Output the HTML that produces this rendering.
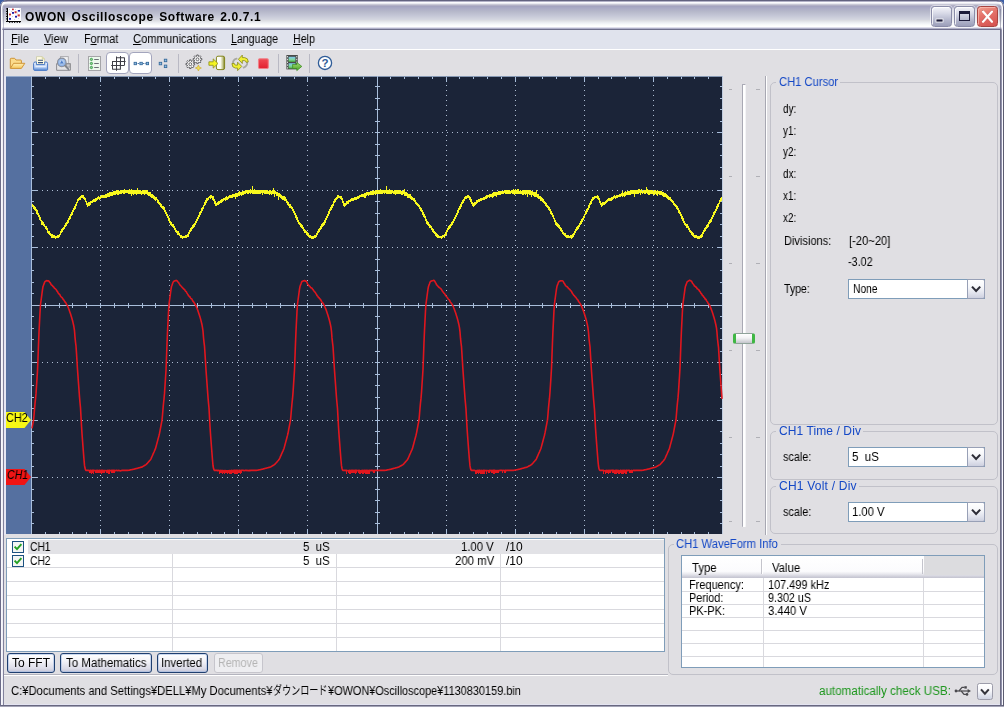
<!DOCTYPE html>
<html lang="ja"><head><meta charset="utf-8"><title>OWON Oscilloscope Software 2.0.7.1</title>
<style>
html,body{margin:0;padding:0;}
html{background:#3d5fa6;}
body{width:1004px;height:708px;position:relative;overflow:hidden;background:#3d5fa6;font-family:"Liberation Sans","Noto Sans CJK JP","IPAGothic",sans-serif;font-size:12px;line-height:14px;color:#000;}
#win{position:absolute;left:0;top:0;width:1004px;height:708px;background:#e0dfe3;border-radius:7px 7px 0 0;overflow:hidden;}
.a{position:absolute;}
.t{position:absolute;white-space:pre;line-height:14px;font-size:12px;transform-origin:0 0;will-change:transform;}
.t u{text-decoration:underline;text-underline-offset:1px;}
#titlebar{left:0;top:0;width:1004px;height:30px;background:linear-gradient(to bottom,#666684 0px,#666684 1px,#9a98b4 1.5px,#ffffff 2.5px,#e4e4ec 3.5px,#c8c8d6 4.5px,#b2b0c6 5.5px,#a4a4c0 6.5px,#a8a8c4 7.5px,#b6b8ca 11.5px,#c4c6d6 15.5px,#d4d6e0 19.5px,#dcdde2 20.5px,#eef0f4 23px,#fbfcfb 25px,#ffffff 26.5px,#e0e0ec 27.5px,#b0b0c8 28.5px,#70708c 29.5px,#70708c 30px);}
#menubar{left:4px;top:30px;width:996px;height:19px;background:#e0e3ed;}
#mline{left:4px;top:49px;width:996px;height:1px;background:#ffffff;}
#toolbar{left:4px;top:50px;width:996px;height:26px;background:#e0dfe3;}
/* frame */
.fr{position:absolute;}
/* title buttons */
.cb{position:absolute;top:6px;width:21px;height:21px;border-radius:3.5px;box-sizing:border-box;}
.cb.g{background:linear-gradient(to bottom,#f4f5fa 0%,#d6d8e6 35%,#b3b6cc 70%,#9c9fba 100%);border:1px solid #8a8ca8;box-shadow:inset 1px 1px 0 rgba(255,255,255,.8),0 0 0 1px rgba(255,255,255,.55);}
.cb.r{background:linear-gradient(160deg,#f0a08e 0%,#e4726a 40%,#d4504e 100%);border:1px solid #a84440;box-shadow:inset 1px 1px 0 rgba(255,200,190,.6),0 0 0 1px rgba(255,255,255,.55);}
/* group boxes */
.gb{position:absolute;border:1px solid #c1c1c9;border-radius:5px;box-sizing:border-box;}
.gl{position:absolute;background:#e0dfe3;height:12px;}
/* combos */
.combo{position:absolute;box-sizing:border-box;border:1px solid #7f9db9;background:#fff;height:20px;}
.combo .dd{position:absolute;right:-1px;top:-1px;width:18px;height:20px;box-sizing:border-box;border:1px solid #98a0b6;border-radius:0 2px 2px 0;background:linear-gradient(to bottom,#ffffff 0%,#f6f7fa 40%,#e0e2ec 75%,#cdd0df 100%);}
.combo .dd svg,.ddb svg{position:absolute;left:0;top:0;}
/* list */
.lv{position:absolute;box-sizing:border-box;border:1px solid #7f9db9;background:#fff;overflow:hidden;}
.hl{position:absolute;height:1px;background:#d9d9de;}
.vl{position:absolute;width:1px;background:#d9d9de;}
/* buttons */
.btn{position:absolute;box-sizing:border-box;height:20px;border:1px solid #1f3f70;border-radius:3px;background:linear-gradient(to bottom,#ffffff 0%,#f3f3f8 40%,#dcdce8 80%,#c6c6d8 100%);box-shadow:inset 0 0 0 1px rgba(160,185,225,.55);}
.btn.dis{border-color:#c6c5cc;background:#eeeef1;box-shadow:none;}

</style></head>
<body>
<div id="win">
<div id="titlebar" class="a"></div>
<svg class="a" style="left:0;top:0" width="1004" height="30" viewBox="0 0 1004 30" fill="none">
<path d="M1.6 30 V8 Q1.6 2.5 8 2.5 H996 Q1002.4 2.5 1002.4 8 V30" stroke="#fbfbfe" stroke-width="1.5"/>
<path d="M0.5 30 V7 Q0.5 0.5 7 0.5 H997 Q1003.5 0.5 1003.5 7 V30" stroke="#626280" stroke-width="1"/>
<path d="M3.5 30 V9" stroke="#82829c" stroke-width="1" opacity="0.5"/><path d="M1000.5 30 V9" stroke="#6c6c84" stroke-width="1" opacity="0.5"/>
</svg>
<!-- app icon -->
<svg class="a" style="left:5px;top:7px" width="17" height="16" viewBox="5 7 17 16">
<rect x="8" y="8" width="13" height="13" fill="#fdfdff"/>
<g fill="#d0d0dc"><rect x="9" y="9" width="1" height="1"/><rect x="11" y="11" width="1" height="1"/><rect x="15" y="9" width="1" height="1"/><rect x="17" y="12.5" width="1" height="1"/><rect x="12" y="16" width="1" height="1"/><rect x="14" y="19" width="1" height="1"/><rect x="18" y="18" width="1" height="1"/><rect x="19.5" y="8.5" width="1" height="1"/><rect x="9" y="16.5" width="1" height="1"/></g>
<g fill="#000"><rect x="7" y="8" width="1" height="14"/><rect x="6" y="21" width="15" height="1"/>
<rect x="6" y="8.4" width="1" height="1"/><rect x="6" y="10.9" width="1" height="1"/><rect x="6" y="13.4" width="1" height="1"/><rect x="6" y="15.9" width="1" height="1"/><rect x="6" y="18.4" width="1" height="1"/>
<rect x="9.2" y="22" width="1" height="1"/><rect x="11.7" y="22" width="1" height="1"/><rect x="14.2" y="22" width="1" height="1"/><rect x="16.7" y="22" width="1" height="1"/><rect x="19.2" y="22" width="1" height="1"/></g>
<g fill="#c83030"><rect x="12" y="8.6" width="1.8" height="1.6"/><rect x="14.6" y="11.2" width="2" height="2"/><rect x="17.6" y="14.4" width="2.2" height="2"/><rect x="9" y="13.6" width="2" height="1.8"/></g>
<g fill="#1c1ca8"><rect x="12" y="12" width="2" height="1.8"/><rect x="17.8" y="10" width="2.2" height="1.6"/><rect x="15" y="15.8" width="2" height="1.8"/><rect x="9" y="18" width="2" height="1.8"/></g>
</svg>
<!-- caption buttons -->
<div class="cb g" style="left:931px"><svg class="a" style="left:0;top:0" width="19" height="19"><rect x="4" y="12" width="7" height="3" fill="#1c1c3a" stroke="#fff" stroke-width="0.8"/></svg></div>
<div class="cb g" style="left:954px"><svg class="a" style="left:0;top:0" width="19" height="19"><rect x="4.5" y="4.5" width="10" height="9" fill="none" stroke="#1c1c3a" stroke-width="1"/><rect x="4" y="4" width="11" height="3" fill="#1c1c3a"/></svg></div>
<div class="cb r" style="left:977px"><svg class="a" style="left:0;top:0" width="19" height="19"><path d="M4.6 3.8 L13.8 14 M13.8 3.8 L4.6 14" stroke="#7a2020" stroke-width="1.2" stroke-linecap="round" opacity="0.7"/><path d="M5 4.6 L14 14.8 M14 4.6 L5 14.8" stroke="#fff" stroke-width="2.2" stroke-linecap="round"/></svg></div>

<div id="menubar" class="a"></div>
<div id="mline" class="a"></div>
<div id="toolbar" class="a"></div>
<svg id="tbicons" width="400" height="26" viewBox="4 50 400 26" style="position:absolute;left:4px;top:50px">
<defs>
<linearGradient id="gFold" x1="0" y1="0" x2="0" y2="1"><stop offset="0" stop-color="#fff0b4"/><stop offset="1" stop-color="#f7c85e"/></linearGradient>
<linearGradient id="gPrn" x1="0" y1="0" x2="0" y2="1"><stop offset="0" stop-color="#f4f8ff"/><stop offset="0.6" stop-color="#b9d0f4"/><stop offset="1" stop-color="#4f83d2"/></linearGradient>
<linearGradient id="gDoor" x1="0" y1="0" x2="1" y2="0"><stop offset="0" stop-color="#ffffff"/><stop offset="0.5" stop-color="#fafaf0"/><stop offset="0.78" stop-color="#c4c688"/><stop offset="1" stop-color="#74761c"/></linearGradient>
<linearGradient id="gStop" x1="0" y1="0" x2="0" y2="1"><stop offset="0" stop-color="#f04a54"/><stop offset="1" stop-color="#e22030"/></linearGradient>
<linearGradient id="gFrm" x1="0" y1="0" x2="0" y2="1"><stop offset="0" stop-color="#7cc4f0"/><stop offset="0.55" stop-color="#7fd6a0"/><stop offset="1" stop-color="#4cb840"/></linearGradient>
<linearGradient id="gArr" x1="0" y1="0" x2="0" y2="1"><stop offset="0" stop-color="#a4dc70"/><stop offset="1" stop-color="#4aa428"/></linearGradient>
<radialGradient id="gLens" cx="0.5" cy="0.45" r="0.6"><stop offset="0" stop-color="#d8e8fc"/><stop offset="1" stop-color="#6c98d8"/></radialGradient>
</defs>
<!-- checked button backgrounds -->
<rect x="106.5" y="52.5" width="22" height="21" rx="3.5" fill="#ffffff" stroke="#a3a5bd"/>
<rect x="129.5" y="52.5" width="22" height="21" rx="3.5" fill="#ffffff" stroke="#a3a5bd"/>
<!-- separators -->
<g stroke="#b9b9c4" shape-rendering="crispEdges"><line x1="78.5" y1="54" x2="78.5" y2="73"/><line x1="178.5" y1="54" x2="178.5" y2="73"/><line x1="278.5" y1="54" x2="278.5" y2="73"/><line x1="309.5" y1="54" x2="309.5" y2="73"/></g>
<!-- 1 folder -->
<path d="M10.3 68.2 V59.2 Q10.3 58.3 11.2 58.3 H14.6 L16 60 H20.6 Q21.4 60 21.4 60.9 V63" fill="#fbdc8c" stroke="#cf9436" stroke-width="1"/>
<path d="M10.4 68.4 L13.6 63.3 H24.8 L21.4 68.4 Z" fill="url(#gFold)" stroke="#cf9436" stroke-width="1" stroke-linejoin="round"/>
<!-- 2 printer -->
<path d="M36.5 64.5 V56.6 H42.2 L44.6 59 V64.5 Z" fill="#fffbe0" stroke="#c9c9a8" stroke-width="0.8"/>
<path d="M42.2 56.6 V59 H44.6" fill="#e8e4a0" stroke="#c9c9a8" stroke-width="0.6"/>
<g stroke="#35507e" stroke-width="1.1"><line x1="38" y1="60.3" x2="43" y2="60.3"/><line x1="38" y1="62.6" x2="43" y2="62.6"/></g>
<path d="M33.6 69.3 V63.6 Q33.6 62 35.2 62 H36.4 V64.6 H44.7 V62 H46 Q47.6 62 47.6 63.6 V69.3 Q47.6 70.4 46.4 70.4 H34.8 Q33.6 70.4 33.6 69.3 Z" fill="url(#gPrn)" stroke="#4a7ac6" stroke-width="1"/>
<line x1="35.5" y1="66.7" x2="45.8" y2="66.7" stroke="#ffffff" stroke-opacity="0.8" stroke-width="0.9"/>
<!-- 3 preview -->
<rect x="60.5" y="56.6" width="7.8" height="9" fill="#f0f0f2" stroke="#a8a8ac" stroke-width="0.9"/>
<path d="M56.6 70.3 V63.6 H70.4 V70.3 Z" fill="#e4e4e6" stroke="#8e8e92" stroke-width="1"/>
<rect x="66.3" y="63.9" width="3.8" height="3.2" fill="#c8c8cc" stroke="#8e8e92" stroke-width="0.8"/>
<circle cx="61.8" cy="62.4" r="4.3" fill="url(#gLens)" stroke="#8a8e98" stroke-width="1.1"/>
<path d="M61.8 60.2 L63.6 63.6 H60 Z" fill="#4c7cc8"/>
<line x1="65" y1="65.6" x2="68.6" y2="69.4" stroke="#80848c" stroke-width="1.7" stroke-linecap="round"/>
<!-- 4 list -->
<rect x="88.5" y="56.5" width="12" height="14" fill="#edf9ee" stroke="#a5a5a8"/>
<g fill="#86d08c" stroke="#2f9440" stroke-width="0.8"><circle cx="91.4" cy="59.4" r="1.15"/><circle cx="91.4" cy="63.5" r="1.15"/><circle cx="91.4" cy="67.5" r="1.15"/></g>
<g stroke="#5c6068" stroke-width="0.9"><line x1="94.2" y1="59.5" x2="98.8" y2="59.5"/><line x1="94.2" y1="63.5" x2="98.8" y2="63.5"/><line x1="94.2" y1="67.5" x2="98.8" y2="67.5"/></g>
<!-- 5 grid -->
<g stroke="#3e3e46" stroke-width="1.05" fill="none">
<path d="M116.5 56.6 V61.5 M120.5 56 V65.5 M124.5 58 V65 M116 57.8 H124.8 M116.5 61.5 H125.6 M120.5 65.4 H124.6"/>
<path d="M112.5 61.6 V69.4 M116.5 61 V70.8 M120.4 61.5 V69.4 M112 61.5 H120.5 M111.2 65.4 H120.5 M112.4 69.2 H120.8"/>
</g>
<!-- 6 dots connected -->
<line x1="135" y1="63.5" x2="148" y2="63.5" stroke="#3d6c9e" stroke-width="0.9" stroke-dasharray="1.6 1"/>
<g fill="#8fbce0" stroke="#34689a" stroke-width="0.85"><rect x="134.1" y="62.3" width="2.4" height="2.4"/><rect x="139.9" y="62.3" width="2.4" height="2.4"/><rect x="146.2" y="62.3" width="2.4" height="2.4"/></g>
<!-- 7 three dots -->
<g fill="#8fbce0" stroke="#34689a" stroke-width="0.85"><rect x="159.2" y="62.3" width="2.5" height="2.5"/><rect x="164.3" y="59.2" width="2.5" height="2.5"/><rect x="164.3" y="65.1" width="2.5" height="2.5"/></g>
<!-- 8 gears -->
<g fill="#fdfdfd" stroke="#4c4c50" stroke-width="0.85" stroke-linejoin="round">
<path d="M194.63 63.44 L194.63 64.96 L193.41 64.95 L193.03 65.87 L193.90 66.73 L192.83 67.80 L191.97 66.93 L191.05 67.31 L191.06 68.53 L189.54 68.53 L189.55 67.31 L188.63 66.93 L187.77 67.80 L186.70 66.73 L187.57 65.87 L187.19 64.95 L185.97 64.96 L185.97 63.44 L187.19 63.45 L187.57 62.53 L186.70 61.67 L187.77 60.60 L188.63 61.47 L189.55 61.09 L189.54 59.87 L191.06 59.87 L191.05 61.09 L191.97 61.47 L192.83 60.60 L193.90 61.67 L193.03 62.53 L193.41 63.45Z"/>
<circle cx="190.3" cy="64.2" r="1.45"/>
<path d="M201.83 58.54 L201.83 60.06 L200.61 60.05 L200.23 60.97 L201.10 61.83 L200.03 62.90 L199.17 62.03 L198.25 62.41 L198.26 63.63 L196.74 63.63 L196.75 62.41 L195.83 62.03 L194.97 62.90 L193.90 61.83 L194.77 60.97 L194.39 60.05 L193.17 60.06 L193.17 58.54 L194.39 58.55 L194.77 57.63 L193.90 56.77 L194.97 55.70 L195.83 56.57 L196.75 56.19 L196.74 54.97 L198.26 54.97 L198.25 56.19 L199.17 56.57 L200.03 55.70 L201.10 56.77 L200.23 57.63 L200.61 58.55Z"/>
<circle cx="197.5" cy="59.3" r="1.45"/>
</g>
<path d="M198.4 65 l.9 2.1 2.1.9 -2.1.9 -.9 2.1 -.9-2.1 -2.1-.9 2.1-.9z" fill="#f2e05a" stroke="#c8a82c" stroke-width="0.6"/>
<!-- 9 arrow door -->
<rect x="216.4" y="56.2" width="8.2" height="13.4" rx="1.6" fill="url(#gDoor)" stroke="#84861c" stroke-width="1"/>
<path d="M208.9 61.8 H213.2 V58.9 L218 63.5 L213.2 68.1 V65.3 H208.9 Z" fill="#f4f422" stroke="#8c8e1e" stroke-width="0.8" stroke-linejoin="round"/>
<!-- 10 refresh -->
<path d="M247.3 62.4 Q247.4 66 243.6 67.6" fill="none" stroke="#a9a9a2" stroke-width="1.7" stroke-linecap="round"/>
<path d="M232.9 63.2 Q232.8 59.8 236.6 58.6" fill="none" stroke="#a9a9a2" stroke-width="1.7" stroke-linecap="round"/>
<path d="M238.4 59.3 L242.3 55.1 V57.6 H244.6 Q248.3 57.9 248.3 62 L246 62.3 Q246 60.7 244.4 60.6 H242.3 V63.5 Z" fill="#f0f034" stroke="#86881c" stroke-width="0.8" stroke-linejoin="round"/>
<path d="M241.8 66.4 L237.6 70.6 V68.1 H235.4 Q231.9 67.7 231.9 63.6 L234.2 63.3 Q234.2 65 235.8 65.1 H237.6 V62.2 Z" fill="#f0f034" stroke="#86881c" stroke-width="0.8" stroke-linejoin="round"/>
<!-- 11 stop -->
<rect x="258.5" y="58.7" width="9.8" height="9.8" rx="1.2" fill="url(#gStop)" stroke="#f08088" stroke-width="1.1"/>
<!-- 12 film -->
<rect x="286.4" y="55" width="11.4" height="14.4" fill="#4a4c4a"/>
<rect x="288.6" y="56.8" width="6.8" height="5" fill="url(#gFrm)"/>
<rect x="288.6" y="63.2" width="6.8" height="5.2" fill="url(#gFrm)"/>
<g fill="#d8d8d8"><rect x="287" y="56" width="1" height="1.4"/><rect x="287" y="58.8" width="1" height="1.4"/><rect x="287" y="61.6" width="1" height="1.4"/><rect x="287" y="64.4" width="1" height="1.4"/><rect x="287" y="67.2" width="1" height="1.4"/>
<rect x="296.2" y="56" width="1" height="1.4"/><rect x="296.2" y="58.8" width="1" height="1.4"/><rect x="296.2" y="61.6" width="1" height="1.4"/></g>
<path d="M292.6 64.4 H296.8 V62.4 L301.8 66.4 L296.8 70.6 V68.5 H292.6 Z" fill="url(#gArr)" stroke="#3f8f24" stroke-width="0.8" stroke-linejoin="round"/>
<!-- 13 help -->
<circle cx="325" cy="62.9" r="6.6" fill="#ffffff" stroke="#2f5c98" stroke-width="1.3"/>
<text x="325" y="67" text-anchor="middle" font-family="'Liberation Sans',sans-serif" font-weight="bold" font-size="11.5" fill="#2f5c98">?</text>
</svg>

<svg id="scope" width="717" height="458" viewBox="6 76 717 458" style="position:absolute;left:6px;top:76px">
<rect x="6" y="76" width="26" height="458" fill="#5570a0"/>
<rect x="32" y="76" width="690" height="458" fill="#1b2438"/>
<g stroke="#aebdd2" stroke-width="1" stroke-dasharray="1 4" shape-rendering="crispEdges"><line x1="100.5" y1="20" x2="100.5" y2="534" /><line x1="169.5" y1="20" x2="169.5" y2="534" /><line x1="238.5" y1="20" x2="238.5" y2="534" /><line x1="307.5" y1="20" x2="307.5" y2="534" /><line x1="446.5" y1="20" x2="446.5" y2="534" /><line x1="515.5" y1="20" x2="515.5" y2="534" /><line x1="584.5" y1="20" x2="584.5" y2="534" /><line x1="653.5" y1="20" x2="653.5" y2="534" /></g>
<g stroke="#aebdd2" stroke-width="1" stroke-dasharray="1 4" shape-rendering="crispEdges"><line x1="37" y1="132.5" x2="722" y2="132.5" /><line x1="37" y1="190.5" x2="722" y2="190.5" /><line x1="37" y1="247.5" x2="722" y2="247.5" /><line x1="37" y1="362.5" x2="722" y2="362.5" /><line x1="37" y1="420.5" x2="722" y2="420.5" /><line x1="37" y1="477.5" x2="722" y2="477.5" /></g>
<g stroke="#a9bedb" stroke-width="1" shape-rendering="crispEdges"><line x1="32" y1="305.5" x2="722" y2="305.5"/><line x1="377.5" y1="76" x2="377.5" y2="534"/><line x1="31.5" y1="76" x2="31.5" y2="534"/><line x1="722.5" y1="76" x2="722.5" y2="534" stroke-opacity="0.6"/><line x1="6" y1="76.5" x2="723" y2="76.5" stroke-opacity="0.75"/><line x1="45.5" y1="77" x2="45.5" y2="79"/><line x1="45.5" y1="532" x2="45.5" y2="534"/><line x1="45.5" y1="303" x2="45.5" y2="308"/><line x1="59.5" y1="77" x2="59.5" y2="79"/><line x1="59.5" y1="532" x2="59.5" y2="534"/><line x1="59.5" y1="303" x2="59.5" y2="308"/><line x1="72.5" y1="77" x2="72.5" y2="79"/><line x1="72.5" y1="532" x2="72.5" y2="534"/><line x1="72.5" y1="303" x2="72.5" y2="308"/><line x1="86.5" y1="77" x2="86.5" y2="79"/><line x1="86.5" y1="532" x2="86.5" y2="534"/><line x1="86.5" y1="303" x2="86.5" y2="308"/><line x1="100.5" y1="77" x2="100.5" y2="82"/><line x1="100.5" y1="529" x2="100.5" y2="534"/><line x1="100.5" y1="303" x2="100.5" y2="308"/><line x1="114.5" y1="77" x2="114.5" y2="79"/><line x1="114.5" y1="532" x2="114.5" y2="534"/><line x1="114.5" y1="303" x2="114.5" y2="308"/><line x1="128.5" y1="77" x2="128.5" y2="79"/><line x1="128.5" y1="532" x2="128.5" y2="534"/><line x1="128.5" y1="303" x2="128.5" y2="308"/><line x1="142.5" y1="77" x2="142.5" y2="79"/><line x1="142.5" y1="532" x2="142.5" y2="534"/><line x1="142.5" y1="303" x2="142.5" y2="308"/><line x1="155.5" y1="77" x2="155.5" y2="79"/><line x1="155.5" y1="532" x2="155.5" y2="534"/><line x1="155.5" y1="303" x2="155.5" y2="308"/><line x1="169.5" y1="77" x2="169.5" y2="82"/><line x1="169.5" y1="529" x2="169.5" y2="534"/><line x1="169.5" y1="303" x2="169.5" y2="308"/><line x1="183.5" y1="77" x2="183.5" y2="79"/><line x1="183.5" y1="532" x2="183.5" y2="534"/><line x1="183.5" y1="303" x2="183.5" y2="308"/><line x1="197.5" y1="77" x2="197.5" y2="79"/><line x1="197.5" y1="532" x2="197.5" y2="534"/><line x1="197.5" y1="303" x2="197.5" y2="308"/><line x1="211.5" y1="77" x2="211.5" y2="79"/><line x1="211.5" y1="532" x2="211.5" y2="534"/><line x1="211.5" y1="303" x2="211.5" y2="308"/><line x1="224.5" y1="77" x2="224.5" y2="79"/><line x1="224.5" y1="532" x2="224.5" y2="534"/><line x1="224.5" y1="303" x2="224.5" y2="308"/><line x1="238.5" y1="77" x2="238.5" y2="82"/><line x1="238.5" y1="529" x2="238.5" y2="534"/><line x1="238.5" y1="303" x2="238.5" y2="308"/><line x1="252.5" y1="77" x2="252.5" y2="79"/><line x1="252.5" y1="532" x2="252.5" y2="534"/><line x1="252.5" y1="303" x2="252.5" y2="308"/><line x1="266.5" y1="77" x2="266.5" y2="79"/><line x1="266.5" y1="532" x2="266.5" y2="534"/><line x1="266.5" y1="303" x2="266.5" y2="308"/><line x1="280.5" y1="77" x2="280.5" y2="79"/><line x1="280.5" y1="532" x2="280.5" y2="534"/><line x1="280.5" y1="303" x2="280.5" y2="308"/><line x1="294.5" y1="77" x2="294.5" y2="79"/><line x1="294.5" y1="532" x2="294.5" y2="534"/><line x1="294.5" y1="303" x2="294.5" y2="308"/><line x1="307.5" y1="77" x2="307.5" y2="82"/><line x1="307.5" y1="529" x2="307.5" y2="534"/><line x1="307.5" y1="303" x2="307.5" y2="308"/><line x1="321.5" y1="77" x2="321.5" y2="79"/><line x1="321.5" y1="532" x2="321.5" y2="534"/><line x1="321.5" y1="303" x2="321.5" y2="308"/><line x1="335.5" y1="77" x2="335.5" y2="79"/><line x1="335.5" y1="532" x2="335.5" y2="534"/><line x1="335.5" y1="303" x2="335.5" y2="308"/><line x1="349.5" y1="77" x2="349.5" y2="79"/><line x1="349.5" y1="532" x2="349.5" y2="534"/><line x1="349.5" y1="303" x2="349.5" y2="308"/><line x1="363.5" y1="77" x2="363.5" y2="79"/><line x1="363.5" y1="532" x2="363.5" y2="534"/><line x1="363.5" y1="303" x2="363.5" y2="308"/><line x1="377.5" y1="77" x2="377.5" y2="82"/><line x1="377.5" y1="529" x2="377.5" y2="534"/><line x1="390.5" y1="77" x2="390.5" y2="79"/><line x1="390.5" y1="532" x2="390.5" y2="534"/><line x1="390.5" y1="303" x2="390.5" y2="308"/><line x1="404.5" y1="77" x2="404.5" y2="79"/><line x1="404.5" y1="532" x2="404.5" y2="534"/><line x1="404.5" y1="303" x2="404.5" y2="308"/><line x1="418.5" y1="77" x2="418.5" y2="79"/><line x1="418.5" y1="532" x2="418.5" y2="534"/><line x1="418.5" y1="303" x2="418.5" y2="308"/><line x1="432.5" y1="77" x2="432.5" y2="79"/><line x1="432.5" y1="532" x2="432.5" y2="534"/><line x1="432.5" y1="303" x2="432.5" y2="308"/><line x1="446.5" y1="77" x2="446.5" y2="82"/><line x1="446.5" y1="529" x2="446.5" y2="534"/><line x1="446.5" y1="303" x2="446.5" y2="308"/><line x1="459.5" y1="77" x2="459.5" y2="79"/><line x1="459.5" y1="532" x2="459.5" y2="534"/><line x1="459.5" y1="303" x2="459.5" y2="308"/><line x1="473.5" y1="77" x2="473.5" y2="79"/><line x1="473.5" y1="532" x2="473.5" y2="534"/><line x1="473.5" y1="303" x2="473.5" y2="308"/><line x1="487.5" y1="77" x2="487.5" y2="79"/><line x1="487.5" y1="532" x2="487.5" y2="534"/><line x1="487.5" y1="303" x2="487.5" y2="308"/><line x1="501.5" y1="77" x2="501.5" y2="79"/><line x1="501.5" y1="532" x2="501.5" y2="534"/><line x1="501.5" y1="303" x2="501.5" y2="308"/><line x1="515.5" y1="77" x2="515.5" y2="82"/><line x1="515.5" y1="529" x2="515.5" y2="534"/><line x1="515.5" y1="303" x2="515.5" y2="308"/><line x1="529.5" y1="77" x2="529.5" y2="79"/><line x1="529.5" y1="532" x2="529.5" y2="534"/><line x1="529.5" y1="303" x2="529.5" y2="308"/><line x1="542.5" y1="77" x2="542.5" y2="79"/><line x1="542.5" y1="532" x2="542.5" y2="534"/><line x1="542.5" y1="303" x2="542.5" y2="308"/><line x1="556.5" y1="77" x2="556.5" y2="79"/><line x1="556.5" y1="532" x2="556.5" y2="534"/><line x1="556.5" y1="303" x2="556.5" y2="308"/><line x1="570.5" y1="77" x2="570.5" y2="79"/><line x1="570.5" y1="532" x2="570.5" y2="534"/><line x1="570.5" y1="303" x2="570.5" y2="308"/><line x1="584.5" y1="77" x2="584.5" y2="82"/><line x1="584.5" y1="529" x2="584.5" y2="534"/><line x1="584.5" y1="303" x2="584.5" y2="308"/><line x1="598.5" y1="77" x2="598.5" y2="79"/><line x1="598.5" y1="532" x2="598.5" y2="534"/><line x1="598.5" y1="303" x2="598.5" y2="308"/><line x1="611.5" y1="77" x2="611.5" y2="79"/><line x1="611.5" y1="532" x2="611.5" y2="534"/><line x1="611.5" y1="303" x2="611.5" y2="308"/><line x1="625.5" y1="77" x2="625.5" y2="79"/><line x1="625.5" y1="532" x2="625.5" y2="534"/><line x1="625.5" y1="303" x2="625.5" y2="308"/><line x1="639.5" y1="77" x2="639.5" y2="79"/><line x1="639.5" y1="532" x2="639.5" y2="534"/><line x1="639.5" y1="303" x2="639.5" y2="308"/><line x1="653.5" y1="77" x2="653.5" y2="82"/><line x1="653.5" y1="529" x2="653.5" y2="534"/><line x1="653.5" y1="303" x2="653.5" y2="308"/><line x1="667.5" y1="77" x2="667.5" y2="79"/><line x1="667.5" y1="532" x2="667.5" y2="534"/><line x1="667.5" y1="303" x2="667.5" y2="308"/><line x1="681.5" y1="77" x2="681.5" y2="79"/><line x1="681.5" y1="532" x2="681.5" y2="534"/><line x1="681.5" y1="303" x2="681.5" y2="308"/><line x1="694.5" y1="77" x2="694.5" y2="79"/><line x1="694.5" y1="532" x2="694.5" y2="534"/><line x1="694.5" y1="303" x2="694.5" y2="308"/><line x1="708.5" y1="77" x2="708.5" y2="79"/><line x1="708.5" y1="532" x2="708.5" y2="534"/><line x1="708.5" y1="303" x2="708.5" y2="308"/><line x1="32" y1="86.5" x2="34" y2="86.5"/><line x1="720" y1="86.5" x2="722" y2="86.5"/><line x1="375" y1="86.5" x2="380" y2="86.5"/><line x1="32" y1="98.5" x2="34" y2="98.5"/><line x1="720" y1="98.5" x2="722" y2="98.5"/><line x1="375" y1="98.5" x2="380" y2="98.5"/><line x1="32" y1="109.5" x2="34" y2="109.5"/><line x1="720" y1="109.5" x2="722" y2="109.5"/><line x1="375" y1="109.5" x2="380" y2="109.5"/><line x1="32" y1="121.5" x2="34" y2="121.5"/><line x1="720" y1="121.5" x2="722" y2="121.5"/><line x1="375" y1="121.5" x2="380" y2="121.5"/><line x1="32" y1="132.5" x2="37" y2="132.5"/><line x1="717" y1="132.5" x2="722" y2="132.5"/><line x1="375" y1="132.5" x2="380" y2="132.5"/><line x1="32" y1="144.5" x2="34" y2="144.5"/><line x1="720" y1="144.5" x2="722" y2="144.5"/><line x1="375" y1="144.5" x2="380" y2="144.5"/><line x1="32" y1="155.5" x2="34" y2="155.5"/><line x1="720" y1="155.5" x2="722" y2="155.5"/><line x1="375" y1="155.5" x2="380" y2="155.5"/><line x1="32" y1="167.5" x2="34" y2="167.5"/><line x1="720" y1="167.5" x2="722" y2="167.5"/><line x1="375" y1="167.5" x2="380" y2="167.5"/><line x1="32" y1="178.5" x2="34" y2="178.5"/><line x1="720" y1="178.5" x2="722" y2="178.5"/><line x1="375" y1="178.5" x2="380" y2="178.5"/><line x1="32" y1="190.5" x2="37" y2="190.5"/><line x1="717" y1="190.5" x2="722" y2="190.5"/><line x1="375" y1="190.5" x2="380" y2="190.5"/><line x1="32" y1="201.5" x2="34" y2="201.5"/><line x1="720" y1="201.5" x2="722" y2="201.5"/><line x1="375" y1="201.5" x2="380" y2="201.5"/><line x1="32" y1="213.5" x2="34" y2="213.5"/><line x1="720" y1="213.5" x2="722" y2="213.5"/><line x1="375" y1="213.5" x2="380" y2="213.5"/><line x1="32" y1="224.5" x2="34" y2="224.5"/><line x1="720" y1="224.5" x2="722" y2="224.5"/><line x1="375" y1="224.5" x2="380" y2="224.5"/><line x1="32" y1="236.5" x2="34" y2="236.5"/><line x1="720" y1="236.5" x2="722" y2="236.5"/><line x1="375" y1="236.5" x2="380" y2="236.5"/><line x1="32" y1="247.5" x2="37" y2="247.5"/><line x1="717" y1="247.5" x2="722" y2="247.5"/><line x1="375" y1="247.5" x2="380" y2="247.5"/><line x1="32" y1="259.5" x2="34" y2="259.5"/><line x1="720" y1="259.5" x2="722" y2="259.5"/><line x1="375" y1="259.5" x2="380" y2="259.5"/><line x1="32" y1="270.5" x2="34" y2="270.5"/><line x1="720" y1="270.5" x2="722" y2="270.5"/><line x1="375" y1="270.5" x2="380" y2="270.5"/><line x1="32" y1="282.5" x2="34" y2="282.5"/><line x1="720" y1="282.5" x2="722" y2="282.5"/><line x1="375" y1="282.5" x2="380" y2="282.5"/><line x1="32" y1="293.5" x2="34" y2="293.5"/><line x1="720" y1="293.5" x2="722" y2="293.5"/><line x1="375" y1="293.5" x2="380" y2="293.5"/><line x1="32" y1="305.5" x2="37" y2="305.5"/><line x1="717" y1="305.5" x2="722" y2="305.5"/><line x1="32" y1="316.5" x2="34" y2="316.5"/><line x1="720" y1="316.5" x2="722" y2="316.5"/><line x1="375" y1="316.5" x2="380" y2="316.5"/><line x1="32" y1="328.5" x2="34" y2="328.5"/><line x1="720" y1="328.5" x2="722" y2="328.5"/><line x1="375" y1="328.5" x2="380" y2="328.5"/><line x1="32" y1="339.5" x2="34" y2="339.5"/><line x1="720" y1="339.5" x2="722" y2="339.5"/><line x1="375" y1="339.5" x2="380" y2="339.5"/><line x1="32" y1="351.5" x2="34" y2="351.5"/><line x1="720" y1="351.5" x2="722" y2="351.5"/><line x1="375" y1="351.5" x2="380" y2="351.5"/><line x1="32" y1="362.5" x2="37" y2="362.5"/><line x1="717" y1="362.5" x2="722" y2="362.5"/><line x1="375" y1="362.5" x2="380" y2="362.5"/><line x1="32" y1="374.5" x2="34" y2="374.5"/><line x1="720" y1="374.5" x2="722" y2="374.5"/><line x1="375" y1="374.5" x2="380" y2="374.5"/><line x1="32" y1="385.5" x2="34" y2="385.5"/><line x1="720" y1="385.5" x2="722" y2="385.5"/><line x1="375" y1="385.5" x2="380" y2="385.5"/><line x1="32" y1="397.5" x2="34" y2="397.5"/><line x1="720" y1="397.5" x2="722" y2="397.5"/><line x1="375" y1="397.5" x2="380" y2="397.5"/><line x1="32" y1="408.5" x2="34" y2="408.5"/><line x1="720" y1="408.5" x2="722" y2="408.5"/><line x1="375" y1="408.5" x2="380" y2="408.5"/><line x1="32" y1="420.5" x2="37" y2="420.5"/><line x1="717" y1="420.5" x2="722" y2="420.5"/><line x1="375" y1="420.5" x2="380" y2="420.5"/><line x1="32" y1="431.5" x2="34" y2="431.5"/><line x1="720" y1="431.5" x2="722" y2="431.5"/><line x1="375" y1="431.5" x2="380" y2="431.5"/><line x1="32" y1="443.5" x2="34" y2="443.5"/><line x1="720" y1="443.5" x2="722" y2="443.5"/><line x1="375" y1="443.5" x2="380" y2="443.5"/><line x1="32" y1="454.5" x2="34" y2="454.5"/><line x1="720" y1="454.5" x2="722" y2="454.5"/><line x1="375" y1="454.5" x2="380" y2="454.5"/><line x1="32" y1="466.5" x2="34" y2="466.5"/><line x1="720" y1="466.5" x2="722" y2="466.5"/><line x1="375" y1="466.5" x2="380" y2="466.5"/><line x1="32" y1="477.5" x2="37" y2="477.5"/><line x1="717" y1="477.5" x2="722" y2="477.5"/><line x1="375" y1="477.5" x2="380" y2="477.5"/><line x1="32" y1="489.5" x2="34" y2="489.5"/><line x1="720" y1="489.5" x2="722" y2="489.5"/><line x1="375" y1="489.5" x2="380" y2="489.5"/><line x1="32" y1="500.5" x2="34" y2="500.5"/><line x1="720" y1="500.5" x2="722" y2="500.5"/><line x1="375" y1="500.5" x2="380" y2="500.5"/><line x1="32" y1="512.5" x2="34" y2="512.5"/><line x1="720" y1="512.5" x2="722" y2="512.5"/><line x1="375" y1="512.5" x2="380" y2="512.5"/><line x1="32" y1="523.5" x2="34" y2="523.5"/><line x1="720" y1="523.5" x2="722" y2="523.5"/><line x1="375" y1="523.5" x2="380" y2="523.5"/></g>
<path d="M32 204V204 H33V205 H34V206 H35V207 H36V209 H37V210 H38V213 H39V215 H40V217 H41V220 H42V221 H43V222 H44V224 H45V226 H46V226 H47V228 H48V231 H49V231 H50V233 H51V234 H52V234 H53V235 H54V235 H55V236 H56V236 H57V235 H58V235 H59V234 H60V231 H61V229 H62V228 H63V227 H64V225 H65V223 H66V222 H67V220 H68V218 H69V216 H70V214 H71V212 H72V210 H73V208 H74V206 H75V204 H76V202 H77V199 H78V198 H79V197 H80V196 H81V195 H82V195 H83V195 H84V197 H85V198 H86V201 H87V203 H88V202 H89V202 H90V201 H91V201 H92V200 H93V199 H94V199 H95V198 H96V198 H97V197 H98V196 H99V197 H100V196 H101V195 H102V195 H103V195 H104V195 H105V194 H106V194 H107V193 H108V193 H109V192 H110V192 H111V192 H112V192 H113V191 H114V191 H115V191 H116V190 H117V190 H118V190 H119V191 H120V190 H121V190 H122V190 H123V190 H124V189 H125V190 H126V190 H127V190 H128V190 H129V189 H130V190 H131V189 H132V190 H133V190 H134V190 H135V190 H136V190 H137V188 H138V190 H139V190 H140V190 H141V191 H142V190 H143V190 H144V190 H145V190 H146V190 H147V190 H148V192 H149V192 H150V192 H151V194 H152V194 H153V195 H154V196 H155V197 H156V197 H157V199 H158V200 H159V202 H160V203 H161V204 H162V206 H163V206 H164V207 H165V210 H166V212 H167V214 H168V216 H169V218 H170V221 H171V222 H172V224 H173V224 H174V226 H175V228 H176V230 H177V231 H178V231 H179V233 H180V235 H181V235 H182V236 H183V236 H184V236 H185V235 H186V235 H187V234 H188V232 H189V230 H190V228 H191V227 H192V225 H193V224 H194V223 H195V221 H196V219 H197V217 H198V215 H199V212 H200V211 H201V208 H202V207 H203V205 H204V202 H205V200 H206V198 H207V198 H208V197 H209V196 H210V195 H211V195 H212V196 H213V196 H214V199 H215V201 H216V203 H217V202 H218V201 H219V201 H220V200 H221V199 H222V199 H223V198 H224V198 H225V197 H226V196 H227V197 H228V196 H229V195 H230V195 H231V195 H232V194 H233V194 H234V194 H235V193 H236V193 H237V193 H238V192 H239V191 H240V192 H241V192 H242V191 H243V191 H244V191 H245V190 H246V190 H247V190 H248V190 H249V190 H250V189 H251V190 H252V186 H253V190 H254V189 H255V190 H256V190 H257V190 H258V190 H259V190 H260V190 H261V190 H262V190 H263V190 H264V190 H265V190 H266V190 H267V190 H268V191 H269V190 H270V190 H271V191 H272V190 H273V188 H274V190 H275V191 H276V192 H277V192 H278V193 H279V193 H280V194 H281V195 H282V196 H283V196 H284V196 H285V197 H286V199 H287V201 H288V202 H289V204 H290V204 H291V206 H292V207 H293V209 H294V211 H295V213 H296V215 H297V217 H298V220 H299V222 H300V223 H301V224 H302V225 H303V227 H304V229 H305V230 H306V231 H307V232 H308V233 H309V235 H310V235 H311V236 H312V236 H313V236 H314V235 H315V235 H316V233 H317V231 H318V229 H319V228 H320V226 H321V224 H322V223 H323V222 H324V220 H325V218 H326V216 H327V214 H328V211 H329V209 H330V207 H331V205 H332V204 H333V201 H334V199 H335V198 H336V197 H337V195 H338V195 H339V196 H340V196 H341V196 H342V198 H343V201 H344V203 H345V203 H346V201 H347V201 H348V200 H349V200 H350V199 H351V198 H352V198 H353V198 H354V197 H355V197 H356V197 H357V196 H358V196 H359V195 H360V195 H361V194 H362V194 H363V194 H364V193 H365V193 H366V192 H367V192 H368V192 H369V192 H370V191 H371V191 H372V191 H373V190 H374V191 H375V190 H376V190 H377V190 H378V190 H379V190 H380V189 H381V190 H382V190 H383V190 H384V190 H385V190 H386V186 H387V190 H388V190 H389V189 H390V190 H391V190 H392V190 H393V191 H394V190 H395V190 H396V190 H397V190 H398V190 H399V190 H400V190 H401V191 H402V191 H403V190 H404V189 H405V192 H406V192 H407V193 H408V194 H409V194 H410V194 H411V196 H412V197 H413V198 H414V198 H415V200 H416V202 H417V203 H418V204 H419V205 H420V207 H421V208 H422V210 H423V212 H424V214 H425V216 H426V219 H427V221 H428V222 H429V224 H430V225 H431V226 H432V228 H433V229 H434V231 H435V232 H436V233 H437V234 H438V235 H439V236 H440V236 H441V236 H442V235 H443V235 H444V234 H445V232 H446V230 H447V228 H448V226 H449V225 H450V224 H451V222 H452V221 H453V219 H454V217 H455V215 H456V213 H457V210 H458V208 H459V206 H460V204 H461V202 H462V200 H463V199 H464V197 H465V196 H466V196 H467V195 H468V195 H469V196 H470V197 H471V199 H472V202 H473V203 H474V202 H475V202 H476V200 H477V200 H478V199 H479V199 H480V198 H481V198 H482V198 H483V197 H484V197 H485V196 H486V195 H487V195 H488V195 H489V194 H490V194 H491V194 H492V193 H493V192 H494V192 H495V192 H496V192 H497V192 H498V191 H499V191 H500V191 H501V191 H502V191 H503V191 H504V190 H505V190 H506V190 H507V190 H508V190 H509V190 H510V191 H511V190 H512V190 H513V189 H514V190 H515V189 H516V190 H517V189 H518V189 H519V191 H520V190 H521V191 H522V190 H523V190 H524V190 H525V190 H526V190 H527V190 H528V190 H529V190 H530V190 H531V191 H532V191 H533V192 H534V192 H535V192 H536V190 H537V194 H538V194 H539V196 H540V196 H541V197 H542V198 H543V199 H544V201 H545V202 H546V203 H547V205 H548V206 H549V207 H550V209 H551V211 H552V213 H553V215 H554V218 H555V220 H556V222 H557V223 H558V224 H559V225 H560V227 H561V228 H562V230 H563V232 H564V233 H565V233 H566V235 H567V235 H568V235 H569V236 H570V235 H571V235 H572V234 H573V233 H574V231 H575V229 H576V227 H577V226 H578V225 H579V223 H580V221 H581V219 H582V218 H583V216 H584V214 H585V211 H586V209 H587V208 H588V205 H589V203 H590V201 H591V199 H592V197 H593V197 H594V196 H595V196 H596V196 H597V195 H598V196 H599V198 H600V201 H601V203 H602V202 H603V202 H604V202 H605V201 H606V200 H607V199 H608V198 H609V198 H610V198 H611V197 H612V197 H613V196 H614V195 H615V196 H616V195 H617V195 H618V195 H619V194 H620V194 H621V193 H622V191 H623V193 H624V192 H625V191 H626V192 H627V191 H628V191 H629V191 H630V190 H631V190 H632V190 H633V190 H634V190 H635V190 H636V190 H637V190 H638V189 H639V189 H640V190 H641V189 H642V191 H643V190 H644V190 H645V190 H646V187 H647V189 H648V190 H649V190 H650V190 H651V190 H652V190 H653V191 H654V190 H655V190 H656V191 H657V190 H658V191 H659V191 H660V191 H661V191 H662V192 H663V192 H664V193 H665V193 H666V194 H667V195 H668V196 H669V197 H670V197 H671V199 H672V200 H673V201 H674V203 H675V204 H676V205 H677V206 H678V208 H679V210 H680V212 H681V214 H682V216 H683V218 H684V221 H685V223 H686V224 H687V224 H688V226 H689V228 H690V230 H691V231 H692V232 H693V233 H694V235 H695V235 H696V235 H697V236 H698V236 H699V236 H700V235 H701V234 H702V232 H703V230 H704V228 H705V227 H706V225 H707V224 H708V222 H709V220 H710V219 H711V217 H712V215 H713V212 H714V211 H715V209 H716V206 H717V204 H718V203 H719V200 H720V198 H721V197 H722V201 H721V202 H720V204 H719V207 H718V209 H717V211 H716V213 H715V215 H714V217 H713V219 H712V222 H711V223 H710V224 H709V227 H708V228 H707V229 H706V231 H705V232 H704V234 H703V237 H702V238 H701V238 H700V239 H699V239 H698V239 H697V238 H696V238 H695V238 H694V237 H693V236 H692V235 H691V233 H690V232 H689V230 H688V228 H687V228 H686V226 H685V225 H684V223 H683V221 H682V219 H681V216 H680V214 H679V213 H678V210 H677V209 H676V207 H675V206 H674V205 H673V203 H672V202 H671V201 H670V200 H669V200 H668V199 H667V198 H666V197 H665V197 H664V197 H663V196 H662V195 H661V195 H660V195 H659V194 H658V196 H657V195 H656V194 H655V195 H654V195 H653V194 H652V194 H651V194 H650V195 H649V195 H648V194 H647V193 H646V194 H645V194 H644V193 H643V194 H642V193 H641V195 H640V193 H639V194 H638V194 H637V194 H636V194 H635V197 H634V194 H633V194 H632V194 H631V195 H630V195 H629V195 H628V195 H627V195 H626V196 H625V197 H624V196 H623V197 H622V196 H621V197 H620V197 H619V197 H618V198 H617V198 H616V199 H615V198 H614V199 H613V200 H612V201 H611V201 H610V201 H609V201 H608V202 H607V203 H606V204 H605V205 H604V205 H603V206 H602V207 H601V205 H600V203 H599V200 H598V199 H597V198 H596V198 H595V199 H594V200 H593V201 H592V204 H591V205 H590V208 H589V210 H588V212 H587V214 H586V215 H585V218 H584V220 H583V222 H582V224 H581V225 H580V227 H579V229 H578V230 H577V231 H576V233 H575V235 H574V237 H573V238 H572V239 H571V238 H570V238 H569V238 H568V238 H567V238 H566V237 H565V236 H564V235 H563V234 H562V232 H561V231 H560V229 H559V228 H558V227 H557V226 H556V225 H555V222 H554V219 H553V217 H552V215 H551V214 H550V211 H549V210 H548V208 H547V207 H546V206 H545V204 H544V203 H543V202 H542V201 H541V201 H540V199 H539V199 H538V198 H537V197 H536V197 H535V197 H534V196 H533V195 H532V197 H531V195 H530V195 H529V194 H528V197 H527V194 H526V195 H525V194 H524V195 H523V195 H522V194 H521V194 H520V194 H519V194 H518V194 H517V194 H516V194 H515V195 H514V194 H513V194 H512V193 H511V194 H510V194 H509V194 H508V194 H507V194 H506V194 H505V193 H504V194 H503V194 H502V194 H501V195 H500V195 H499V195 H498V195 H497V197 H496V196 H495V196 H494V197 H493V198 H492V197 H491V197 H490V198 H489V197 H488V198 H487V199 H486V199 H485V200 H484V200 H483V200 H482V201 H481V201 H480V202 H479V202 H478V203 H477V204 H476V205 H475V206 H474V207 H473V206 H472V204 H471V202 H470V200 H469V198 H468V198 H467V199 H466V199 H465V201 H464V203 H463V204 H462V207 H461V209 H460V210 H459V213 H458V215 H457V217 H456V219 H455V221 H454V223 H453V225 H452V226 H451V228 H450V229 H449V230 H448V232 H447V235 H446V236 H445V238 H444V237 H443V238 H442V239 H441V238 H440V238 H439V238 H438V238 H437V237 H436V236 H435V234 H434V233 H433V232 H432V230 H431V228 H430V228 H429V226 H428V225 H427V224 H426V221 H425V218 H424V217 H423V215 H422V212 H421V211 H420V209 H419V207 H418V206 H417V205 H416V204 H415V202 H414V201 H413V200 H412V200 H411V199 H410V198 H409V198 H408V198 H407V196 H406V196 H405V196 H404V194 H403V195 H402V195 H401V194 H400V194 H399V194 H398V194 H397V194 H396V195 H395V194 H394V194 H393V193 H392V194 H391V194 H390V194 H389V194 H388V194 H387V194 H386V193 H385V194 H384V193 H383V194 H382V194 H381V194 H380V194 H379V194 H378V194 H377V194 H376V195 H375V194 H374V195 H373V195 H372V195 H371V195 H370V195 H369V196 H368V195 H367V196 H366V198 H365V198 H364V197 H363V197 H362V197 H361V197 H360V198 H359V199 H358V199 H357V200 H356V200 H355V200 H354V201 H353V201 H352V201 H351V202 H350V202 H349V204 H348V204 H347V205 H346V206 H345V207 H344V206 H343V203 H342V200 H341V199 H340V198 H339V198 H338V199 H337V200 H336V202 H335V203 H334V206 H333V208 H332V210 H331V211 H330V214 H329V216 H328V218 H327V220 H326V223 H325V225 H324V226 H323V227 H322V229 H321V230 H320V232 H319V233 H318V235 H317V237 H316V238 H315V238 H314V239 H313V239 H312V239 H311V238 H310V238 H309V237 H308V236 H307V235 H306V233 H305V233 H304V231 H303V229 H302V228 H301V227 H300V225 H299V224 H298V222 H297V220 H296V218 H295V215 H294V213 H293V211 H292V209 H291V208 H290V208 H289V206 H288V205 H287V203 H286V201 H285V201 H284V200 H283V200 H282V199 H281V198 H280V197 H279V200 H278V196 H277V196 H276V194 H275V197 H274V194 H273V194 H272V195 H271V194 H270V195 H269V194 H268V194 H267V194 H266V194 H265V194 H264V193 H263V195 H262V193 H261V194 H260V194 H259V194 H258V194 H257V194 H256V194 H255V194 H254V194 H253V194 H252V193 H251V194 H250V193 H249V194 H248V194 H247V193 H246V194 H245V194 H244V195 H243V195 H242V196 H241V195 H240V196 H239V196 H238V197 H237V197 H236V199 H235V197 H234V197 H233V198 H232V198 H231V198 H230V198 H229V199 H228V200 H227V200 H226V201 H225V200 H224V201 H223V202 H222V203 H221V203 H220V204 H219V205 H218V205 H217V206 H216V206 H215V204 H214V201 H213V200 H212V198 H211V199 H210V198 H209V200 H208V201 H207V203 H206V205 H205V206 H204V209 H203V211 H202V213 H201V215 H200V217 H199V219 H198V221 H197V223 H196V225 H195V227 H194V228 H193V229 H192V231 H191V232 H190V234 H189V237 H188V237 H187V238 H186V238 H185V238 H184V238 H183V239 H182V238 H181V238 H180V236 H179V235 H178V235 H177V233 H176V232 H175V230 H174V228 H173V227 H172V226 H171V225 H170V223 H169V221 H168V218 H167V216 H166V214 H165V212 H164V210 H163V209 H162V208 H161V207 H160V205 H159V204 H158V203 H157V200 H156V201 H155V200 H154V199 H153V198 H152V198 H151V197 H150V196 H149V196 H148V195 H147V194 H146V194 H145V195 H144V194 H143V194 H142V195 H141V194 H140V194 H139V194 H138V194 H137V195 H136V194 H135V194 H134V195 H133V194 H132V196 H131V194 H130V194 H129V194 H128V193 H127V193 H126V193 H125V194 H124V194 H123V193 H122V194 H121V194 H120V194 H119V195 H118V195 H117V194 H116V195 H115V195 H114V195 H113V196 H112V196 H111V196 H110V197 H109V197 H108V197 H107V198 H106V198 H105V198 H104V198 H103V198 H102V198 H101V199 H100V200 H99V199 H98V200 H97V201 H96V202 H95V202 H94V202 H93V203 H92V203 H91V205 H90V206 H89V206 H88V207 H87V205 H86V202 H85V200 H84V199 H83V198 H82V198 H81V200 H80V200 H79V201 H78V203 H77V206 H76V209 H75V210 H74V212 H73V215 H72V216 H71V219 H70V220 H69V223 H68V224 H67V226 H66V227 H65V229 H64V230 H63V232 H62V233 H61V235 H60V237 H59V238 H58V238 H57V238 H56V239 H55V238 H54V238 H53V238 H52V238 H51V236 H50V235 H49V234 H48V233 H47V230 H46V229 H45V227 H44V226 H43V225 H42V225 H41V221 H40V220 H39V217 H38V215 H37V214 H36V211 H35V210 H34V209 H33V207 H32Z" fill="#f8f81e" shape-rendering="crispEdges"/>
<path d="M32.0 428.3 L32.5 425.7 L33.0 423.1 L33.5 420.4 L34.0 415.5 L34.5 409.4 L35.0 403.7 L35.5 399.2 L36.0 393.9 L36.5 386.2 L37.0 378.6 L37.5 370.9 L38.0 358.2 L38.5 344.7 L39.0 332.2 L39.5 322.4 L40.0 312.6 L40.5 304.5 L41.0 300.8 L41.5 297.1 L42.0 293.4 L42.5 289.7 L43.0 286.6 L43.5 285.3 L44.0 283.9 L44.5 282.6 L45.0 281.5 L45.5 281.3 L46.0 281.0 L46.5 280.7 L47.0 280.5 L47.5 280.9 L48.0 280.8 L48.5 280.7 L49.0 281.3 L49.5 282.0 L50.0 282.7 L50.5 283.1 L51.0 284.4 L51.5 285.0 L52.0 285.3 L52.5 285.7 L53.0 286.6 L53.5 286.8 L54.0 287.5 L54.5 288.2 L55.0 288.5 L55.5 288.9 L56.0 289.6 L56.5 290.0 L57.0 291.1 L57.5 291.6 L58.0 292.7 L58.5 293.4 L59.0 294.0 L59.5 294.3 L60.0 294.9 L60.5 296.2 L61.0 296.7 L61.5 297.2 L62.0 297.6 L62.5 298.2 L63.0 299.1 L63.5 299.6 L64.0 300.3 L64.5 301.1 L65.0 302.0 L65.5 302.3 L66.0 303.1 L66.5 304.5 L67.0 304.9 L67.5 305.8 L68.0 307.0 L68.5 308.3 L69.0 309.5 L69.5 310.9 L70.0 312.4 L70.5 313.8 L71.0 315.4 L71.5 317.0 L72.0 318.7 L72.5 320.5 L73.0 322.6 L73.5 324.7 L74.0 327.4 L74.5 330.7 L75.0 337.1 L75.5 342.1 L76.0 346.0 L76.5 353.1 L77.0 361.3 L77.5 369.5 L78.0 376.4 L78.5 383.2 L79.0 390.0 L79.5 396.9 L80.0 402.7 L80.5 407.7 L81.0 416.6 L81.5 425.8 L82.0 433.6 L82.5 440.3 L83.0 446.9 L83.5 453.4 L84.0 459.6 L84.5 465.4 L85.0 468.1 L85.5 469.8 L86.0 470.4 L86.5 470.4 L87.0 470.4 L87.5 470.4 L88.0 470.4 L88.5 470.4 L89.0 470.8 L89.5 470.8 L90.0 470.2 L90.5 470.2 L91.0 470.4 L91.5 470.5 L92.0 470.6 L92.5 470.3 L93.0 470.6 L93.5 470.3 L94.0 470.3 L94.5 470.7 L95.0 470.6 L95.5 470.6 L96.0 470.5 L96.5 470.5 L97.0 470.3 L97.5 470.4 L98.0 470.7 L98.5 470.8 L99.0 470.3 L99.5 470.3 L100.0 470.8 L100.5 470.6 L101.0 470.7 L101.5 470.3 L102.0 470.5 L102.5 470.4 L103.0 470.8 L103.5 470.5 L104.0 470.7 L104.5 470.9 L105.0 470.4 L105.5 470.6 L106.0 470.7 L106.5 470.8 L107.0 470.5 L107.5 470.5 L108.0 470.3 L108.5 470.8 L109.0 470.3 L109.5 470.3 L110.0 470.6 L110.5 470.5 L111.0 470.7 L111.5 470.4 L112.0 470.7 L112.5 470.3 L113.0 470.3 L113.5 470.7 L114.0 470.3 L114.5 470.4 L115.0 470.7 L115.5 470.7 L116.0 470.4 L116.5 470.3 L117.0 470.5 L117.5 470.7 L118.0 470.5 L118.5 470.3 L119.0 470.7 L119.5 470.6 L120.0 470.8 L120.5 470.9 L121.0 470.8 L121.5 470.5 L122.0 470.4 L122.5 470.4 L123.0 470.4 L123.5 470.4 L124.0 470.4 L124.5 470.4 L125.0 470.4 L125.5 470.4 L126.0 470.4 L126.5 470.4 L127.0 470.4 L127.5 470.4 L128.0 470.4 L128.5 470.3 L129.0 470.2 L129.5 470.1 L130.0 470.0 L130.5 469.9 L131.0 469.8 L131.5 469.7 L132.0 469.6 L132.5 469.5 L133.0 469.4 L133.5 469.3 L134.0 469.2 L134.5 469.0 L135.0 468.9 L135.5 468.8 L136.0 468.6 L136.5 468.5 L137.0 468.4 L137.5 468.2 L138.0 468.1 L138.5 467.9 L139.0 467.8 L139.5 467.7 L140.0 467.5 L140.5 467.4 L141.0 467.3 L141.5 467.1 L142.0 467.0 L142.5 466.7 L143.0 466.4 L143.5 466.1 L144.0 465.8 L144.5 465.5 L145.0 465.2 L145.5 464.9 L146.0 464.6 L146.5 464.2 L147.0 463.6 L147.5 463.1 L148.0 462.5 L148.5 461.9 L149.0 461.4 L149.5 460.8 L150.0 460.2 L150.5 459.7 L151.0 458.8 L151.5 457.7 L152.0 456.5 L152.5 455.4 L153.0 454.2 L153.5 453.1 L154.0 452.0 L154.5 450.8 L155.0 449.7 L155.5 448.6 L156.0 446.7 L156.5 444.9 L157.0 443.0 L157.5 441.1 L158.0 439.3 L158.5 437.4 L159.0 435.5 L159.5 433.4 L160.0 430.8 L160.5 428.2 L161.0 425.5 L161.5 422.9 L162.0 420.3 L162.5 415.1 L163.0 409.0 L163.5 403.5 L164.0 399.0 L164.5 393.4 L165.0 385.8 L165.5 378.1 L166.0 370.5 L166.5 357.3 L167.0 343.9 L167.5 331.7 L168.0 321.8 L168.5 312.0 L169.0 304.2 L169.5 300.5 L170.0 296.8 L170.5 293.1 L171.0 289.4 L171.5 286.5 L172.0 285.2 L172.5 283.8 L173.0 282.5 L173.5 281.5 L174.0 281.2 L174.5 281.0 L175.0 280.7 L175.5 280.8 L176.0 280.4 L176.5 280.5 L177.0 280.7 L177.5 281.3 L178.0 282.1 L178.5 282.4 L179.0 283.4 L179.5 284.2 L180.0 285.0 L180.5 285.5 L181.0 286.0 L181.5 286.4 L182.0 287.2 L182.5 287.8 L183.0 288.1 L183.5 288.9 L184.0 289.2 L184.5 289.3 L185.0 290.4 L185.5 291.2 L186.0 291.4 L186.5 292.0 L187.0 293.1 L187.5 293.9 L188.0 294.6 L188.5 295.6 L189.0 296.0 L189.5 296.7 L190.0 296.8 L190.5 297.8 L191.0 298.6 L191.5 298.7 L192.0 299.3 L192.5 300.5 L193.0 301.4 L193.5 301.5 L194.0 302.7 L194.5 303.1 L195.0 304.4 L195.5 304.9 L196.0 305.9 L196.5 307.1 L197.0 308.3 L197.5 309.6 L198.0 311.0 L198.5 312.4 L199.0 313.9 L199.5 315.5 L200.0 317.1 L200.5 318.8 L201.0 320.6 L201.5 322.7 L202.0 324.8 L202.5 327.6 L203.0 331.1 L203.5 337.5 L204.0 342.3 L204.5 346.2 L205.0 353.6 L205.5 361.8 L206.0 370.0 L206.5 376.8 L207.0 383.6 L207.5 390.5 L208.0 397.3 L208.5 403.0 L209.0 408.0 L209.5 417.2 L210.0 426.3 L210.5 434.0 L211.0 440.7 L211.5 447.3 L212.0 453.7 L212.5 460.0 L213.0 465.5 L213.5 468.3 L214.0 469.8 L214.5 470.4 L215.0 470.4 L215.5 470.4 L216.0 470.4 L216.5 470.4 L217.0 470.4 L217.5 470.7 L218.0 470.4 L218.5 470.4 L219.0 470.7 L219.5 470.6 L220.0 470.7 L220.5 470.5 L221.0 470.4 L221.5 470.9 L222.0 470.7 L222.5 470.5 L223.0 470.6 L223.5 470.7 L224.0 470.7 L224.5 470.8 L225.0 470.5 L225.5 470.8 L226.0 470.7 L226.5 470.8 L227.0 470.8 L227.5 470.8 L228.0 470.8 L228.5 470.9 L229.0 470.6 L229.5 470.6 L230.0 470.7 L230.5 470.8 L231.0 470.5 L231.5 470.5 L232.0 470.3 L232.5 470.7 L233.0 470.9 L233.5 470.5 L234.0 470.3 L234.5 470.3 L235.0 470.5 L235.5 470.4 L236.0 470.9 L236.5 470.2 L237.0 470.4 L237.5 470.3 L238.0 470.7 L238.5 470.7 L239.0 470.3 L239.5 470.2 L240.0 470.5 L240.5 470.6 L241.0 470.8 L241.5 470.2 L242.0 470.3 L242.5 470.3 L243.0 470.4 L243.5 470.4 L244.0 470.7 L244.5 470.6 L245.0 470.4 L245.5 470.3 L246.0 470.4 L246.5 470.3 L247.0 470.7 L247.5 470.4 L248.0 470.6 L248.5 470.8 L249.0 470.5 L249.5 470.4 L250.0 470.8 L250.5 470.4 L251.0 470.4 L251.5 470.4 L252.0 470.4 L252.5 470.4 L253.0 470.4 L253.5 470.4 L254.0 470.4 L254.5 470.4 L255.0 470.4 L255.5 470.4 L256.0 470.4 L256.5 470.4 L257.0 470.3 L257.5 470.2 L258.0 470.1 L258.5 470.0 L259.0 469.9 L259.5 469.8 L260.0 469.7 L260.5 469.6 L261.0 469.5 L261.5 469.4 L262.0 469.3 L262.5 469.2 L263.0 469.0 L263.5 468.9 L264.0 468.8 L264.5 468.6 L265.0 468.5 L265.5 468.3 L266.0 468.2 L266.5 468.1 L267.0 467.9 L267.5 467.8 L268.0 467.7 L268.5 467.5 L269.0 467.4 L269.5 467.2 L270.0 467.1 L270.5 466.9 L271.0 466.7 L271.5 466.4 L272.0 466.1 L272.5 465.8 L273.0 465.5 L273.5 465.2 L274.0 464.9 L274.5 464.6 L275.0 464.2 L275.5 463.6 L276.0 463.0 L276.5 462.5 L277.0 461.9 L277.5 461.3 L278.0 460.8 L278.5 460.2 L279.0 459.6 L279.5 458.7 L280.0 457.6 L280.5 456.4 L281.0 455.3 L281.5 454.2 L282.0 453.0 L282.5 451.9 L283.0 450.8 L283.5 449.6 L284.0 448.5 L284.5 446.6 L285.0 444.8 L285.5 442.9 L286.0 441.0 L286.5 439.2 L287.0 437.3 L287.5 435.4 L288.0 433.3 L288.5 430.6 L289.0 428.0 L289.5 425.4 L290.0 422.8 L290.5 420.1 L291.0 414.7 L291.5 408.7 L292.0 403.2 L292.5 398.7 L293.0 392.9 L293.5 385.3 L294.0 377.6 L294.5 370.0 L295.0 356.5 L295.5 343.1 L296.0 331.1 L296.5 321.2 L297.0 311.4 L297.5 304.0 L298.0 300.3 L298.5 296.6 L299.0 292.9 L299.5 289.2 L300.0 286.5 L300.5 285.1 L301.0 283.8 L301.5 282.4 L302.0 281.5 L302.5 281.2 L303.0 281.0 L303.5 280.7 L304.0 280.9 L304.5 280.5 L305.0 280.7 L305.5 281.1 L306.0 281.0 L306.5 281.6 L307.0 282.3 L307.5 283.9 L308.0 284.6 L308.5 285.0 L309.0 285.7 L309.5 286.1 L310.0 286.4 L310.5 287.5 L311.0 287.8 L311.5 287.9 L312.0 288.2 L312.5 289.1 L313.0 289.5 L313.5 290.4 L314.0 291.1 L314.5 291.7 L315.0 292.1 L315.5 292.9 L316.0 293.7 L316.5 294.4 L317.0 295.6 L317.5 295.9 L318.0 296.6 L318.5 297.6 L319.0 297.6 L319.5 298.4 L320.0 298.8 L320.5 299.9 L321.0 300.0 L321.5 301.4 L322.0 302.2 L322.5 302.9 L323.0 303.1 L323.5 304.0 L324.0 305.0 L324.5 306.0 L325.0 307.2 L325.5 308.4 L326.0 309.6 L326.5 311.1 L327.0 312.5 L327.5 314.0 L328.0 315.6 L328.5 317.2 L329.0 318.9 L329.5 320.8 L330.0 322.8 L330.5 325.0 L331.0 327.7 L331.5 331.5 L332.0 337.9 L332.5 342.6 L333.0 346.5 L333.5 354.1 L334.0 362.3 L334.5 370.4 L335.0 377.2 L335.5 384.0 L336.0 390.9 L336.5 397.7 L337.0 403.3 L337.5 408.5 L338.0 417.7 L338.5 426.9 L339.0 434.4 L339.5 441.1 L340.0 447.7 L340.5 454.1 L341.0 460.4 L341.5 465.7 L342.0 468.5 L342.5 469.9 L343.0 470.4 L343.5 470.4 L344.0 470.4 L344.5 470.4 L345.0 470.4 L345.5 470.4 L346.0 470.7 L346.5 470.3 L347.0 470.5 L347.5 470.5 L348.0 470.9 L348.5 470.6 L349.0 470.8 L349.5 470.4 L350.0 470.8 L350.5 470.5 L351.0 470.8 L351.5 470.3 L352.0 470.8 L352.5 470.3 L353.0 470.6 L353.5 470.6 L354.0 470.3 L354.5 470.8 L355.0 470.4 L355.5 470.4 L356.0 470.3 L356.5 470.4 L357.0 470.5 L357.5 470.7 L358.0 470.5 L358.5 470.7 L359.0 470.3 L359.5 470.5 L360.0 470.5 L360.5 470.9 L361.0 470.8 L361.5 470.7 L362.0 470.2 L362.5 470.5 L363.0 470.7 L363.5 470.4 L364.0 470.6 L364.5 470.5 L365.0 470.2 L365.5 470.9 L366.0 470.8 L366.5 470.3 L367.0 470.6 L367.5 470.4 L368.0 470.5 L368.5 470.6 L369.0 470.4 L369.5 470.4 L370.0 470.5 L370.5 470.7 L371.0 470.4 L371.5 470.3 L372.0 470.7 L372.5 470.4 L373.0 470.9 L373.5 470.6 L374.0 470.7 L374.5 470.4 L375.0 470.8 L375.5 470.3 L376.0 470.3 L376.5 470.3 L377.0 470.7 L377.5 470.7 L378.0 470.3 L378.5 470.5 L379.0 470.4 L379.5 470.4 L380.0 470.4 L380.5 470.4 L381.0 470.4 L381.5 470.4 L382.0 470.4 L382.5 470.4 L383.0 470.4 L383.5 470.4 L384.0 470.4 L384.5 470.4 L385.0 470.4 L385.5 470.3 L386.0 470.2 L386.5 470.1 L387.0 470.0 L387.5 469.9 L388.0 469.8 L388.5 469.7 L389.0 469.6 L389.5 469.5 L390.0 469.4 L390.5 469.3 L391.0 469.2 L391.5 469.0 L392.0 468.9 L392.5 468.8 L393.0 468.6 L393.5 468.5 L394.0 468.3 L394.5 468.2 L395.0 468.1 L395.5 467.9 L396.0 467.8 L396.5 467.7 L397.0 467.5 L397.5 467.4 L398.0 467.2 L398.5 467.1 L399.0 466.9 L399.5 466.6 L400.0 466.3 L400.5 466.1 L401.0 465.8 L401.5 465.5 L402.0 465.2 L402.5 464.9 L403.0 464.6 L403.5 464.1 L404.0 463.6 L404.5 463.0 L405.0 462.4 L405.5 461.9 L406.0 461.3 L406.5 460.7 L407.0 460.2 L407.5 459.6 L408.0 458.7 L408.5 457.5 L409.0 456.4 L409.5 455.2 L410.0 454.1 L410.5 453.0 L411.0 451.8 L411.5 450.7 L412.0 449.6 L412.5 448.4 L413.0 446.5 L413.5 444.7 L414.0 442.8 L414.5 440.9 L415.0 439.0 L415.5 437.2 L416.0 435.3 L416.5 433.1 L417.0 430.5 L417.5 427.8 L418.0 425.2 L418.5 422.6 L419.0 420.0 L419.5 414.4 L420.0 408.3 L420.5 402.9 L421.0 398.4 L421.5 392.5 L422.0 384.8 L422.5 377.2 L423.0 369.2 L423.5 355.7 L424.0 342.3 L424.5 330.5 L425.0 320.6 L425.5 310.8 L426.0 303.8 L426.5 300.1 L427.0 296.4 L427.5 292.7 L428.0 289.0 L428.5 286.4 L429.0 285.0 L429.5 283.7 L430.0 282.3 L430.5 281.5 L431.0 281.2 L431.5 280.9 L432.0 280.7 L432.5 280.8 L433.0 280.7 L433.5 280.3 L434.0 280.5 L434.5 280.8 L435.0 281.6 L435.5 282.7 L436.0 283.2 L436.5 284.8 L437.0 285.1 L437.5 285.7 L438.0 286.3 L438.5 286.9 L439.0 287.4 L439.5 287.6 L440.0 288.0 L440.5 288.6 L441.0 288.8 L441.5 289.6 L442.0 290.4 L442.5 291.4 L443.0 291.9 L443.5 292.6 L444.0 293.3 L444.5 293.5 L445.0 294.5 L445.5 295.2 L446.0 296.1 L446.5 296.3 L447.0 297.1 L447.5 297.8 L448.0 298.7 L448.5 299.3 L449.0 299.8 L449.5 300.1 L450.0 301.4 L450.5 302.3 L451.0 302.8 L451.5 303.4 L452.0 304.3 L452.5 305.0 L453.0 306.0 L453.5 307.3 L454.0 308.5 L454.5 309.7 L455.0 311.2 L455.5 312.6 L456.0 314.1 L456.5 315.7 L457.0 317.3 L457.5 319.0 L458.0 320.9 L458.5 323.0 L459.0 325.1 L459.5 327.9 L460.0 331.9 L460.5 338.2 L461.0 342.8 L461.5 346.7 L462.0 354.6 L462.5 362.8 L463.0 370.8 L463.5 377.6 L464.0 384.5 L464.5 391.3 L465.0 398.1 L465.5 403.6 L466.0 409.1 L466.5 418.3 L467.0 427.4 L467.5 434.8 L468.0 441.5 L468.5 448.1 L469.0 454.5 L469.5 460.7 L470.0 465.9 L470.5 468.6 L471.0 469.9 L471.5 470.4 L472.0 470.4 L472.5 470.4 L473.0 470.4 L473.5 470.4 L474.0 470.4 L474.5 470.3 L475.0 470.7 L475.5 470.9 L476.0 470.6 L476.5 470.7 L477.0 470.8 L477.5 470.3 L478.0 470.9 L478.5 470.6 L479.0 470.3 L479.5 470.3 L480.0 470.4 L480.5 470.6 L481.0 470.7 L481.5 470.4 L482.0 470.9 L482.5 470.5 L483.0 470.5 L483.5 470.3 L484.0 470.9 L484.5 470.3 L485.0 470.8 L485.5 470.6 L486.0 470.6 L486.5 470.6 L487.0 470.4 L487.5 470.8 L488.0 470.9 L488.5 470.8 L489.0 470.6 L489.5 470.3 L490.0 470.8 L490.5 470.4 L491.0 470.8 L491.5 470.4 L492.0 470.6 L492.5 470.8 L493.0 470.3 L493.5 470.6 L494.0 470.3 L494.5 470.2 L495.0 470.3 L495.5 470.9 L496.0 470.9 L496.5 470.7 L497.0 470.4 L497.5 470.7 L498.0 470.7 L498.5 470.5 L499.0 470.6 L499.5 470.8 L500.0 470.2 L500.5 470.3 L501.0 470.5 L501.5 470.3 L502.0 470.5 L502.5 470.6 L503.0 470.3 L503.5 470.6 L504.0 470.4 L504.5 470.6 L505.0 470.4 L505.5 470.6 L506.0 470.2 L506.5 470.7 L507.0 470.3 L507.5 470.4 L508.0 470.4 L508.5 470.4 L509.0 470.4 L509.5 470.4 L510.0 470.4 L510.5 470.4 L511.0 470.4 L511.5 470.4 L512.0 470.4 L512.5 470.4 L513.0 470.4 L513.5 470.4 L514.0 470.3 L514.5 470.2 L515.0 470.1 L515.5 470.0 L516.0 469.9 L516.5 469.8 L517.0 469.7 L517.5 469.6 L518.0 469.5 L518.5 469.4 L519.0 469.3 L519.5 469.2 L520.0 469.0 L520.5 468.9 L521.0 468.7 L521.5 468.6 L522.0 468.5 L522.5 468.3 L523.0 468.2 L523.5 468.1 L524.0 467.9 L524.5 467.8 L525.0 467.6 L525.5 467.5 L526.0 467.4 L526.5 467.2 L527.0 467.1 L527.5 466.9 L528.0 466.6 L528.5 466.3 L529.0 466.0 L529.5 465.7 L530.0 465.5 L530.5 465.2 L531.0 464.9 L531.5 464.6 L532.0 464.1 L532.5 463.5 L533.0 463.0 L533.5 462.4 L534.0 461.8 L534.5 461.3 L535.0 460.7 L535.5 460.1 L536.0 459.6 L536.5 458.6 L537.0 457.4 L537.5 456.3 L538.0 455.2 L538.5 454.0 L539.0 452.9 L539.5 451.8 L540.0 450.6 L540.5 449.5 L541.0 448.3 L541.5 446.4 L542.0 444.5 L542.5 442.7 L543.0 440.8 L543.5 438.9 L544.0 437.1 L544.5 435.2 L545.0 432.9 L545.5 430.3 L546.0 427.7 L546.5 425.1 L547.0 422.4 L547.5 419.8 L548.0 414.0 L548.5 407.9 L549.0 402.7 L549.5 398.2 L550.0 392.0 L550.5 384.4 L551.0 376.7 L551.5 368.4 L552.0 354.9 L552.5 341.5 L553.0 329.9 L553.5 320.1 L554.0 310.2 L554.5 303.6 L555.0 299.9 L555.5 296.2 L556.0 292.5 L556.5 288.8 L557.0 286.3 L557.5 284.9 L558.0 283.6 L558.5 282.2 L559.0 281.5 L559.5 281.2 L560.0 280.9 L560.5 280.7 L561.0 280.9 L561.5 280.7 L562.0 280.7 L562.5 280.7 L563.0 281.2 L563.5 282.1 L564.0 283.0 L564.5 283.8 L565.0 284.5 L565.5 285.6 L566.0 286.0 L566.5 286.5 L567.0 286.6 L567.5 287.1 L568.0 287.7 L568.5 288.5 L569.0 288.7 L569.5 289.2 L570.0 289.6 L570.5 290.6 L571.0 290.9 L571.5 291.4 L572.0 292.7 L572.5 293.5 L573.0 294.1 L573.5 294.8 L574.0 295.6 L574.5 295.8 L575.0 296.7 L575.5 296.9 L576.0 297.6 L576.5 298.4 L577.0 299.1 L577.5 299.7 L578.0 300.1 L578.5 301.4 L579.0 302.0 L579.5 302.6 L580.0 303.4 L580.5 304.2 L581.0 305.1 L581.5 306.1 L582.0 307.3 L582.5 308.6 L583.0 309.8 L583.5 311.2 L584.0 312.7 L584.5 314.2 L585.0 315.8 L585.5 317.4 L586.0 319.1 L586.5 321.0 L587.0 323.1 L587.5 325.3 L588.0 328.1 L588.5 332.3 L589.0 338.6 L589.5 343.0 L590.0 346.9 L590.5 355.0 L591.0 363.3 L591.5 371.2 L592.0 378.0 L592.5 384.9 L593.0 391.7 L593.5 398.5 L594.0 403.9 L594.5 409.6 L595.0 418.8 L595.5 428.0 L596.0 435.2 L596.5 441.9 L597.0 448.5 L597.5 454.9 L598.0 461.1 L598.5 466.0 L599.0 468.8 L599.5 470.0 L600.0 470.4 L600.5 470.4 L601.0 470.4 L601.5 470.4 L602.0 470.4 L602.5 470.4 L603.0 470.4 L603.5 470.2 L604.0 470.8 L604.5 470.9 L605.0 470.7 L605.5 470.8 L606.0 470.5 L606.5 470.8 L607.0 470.4 L607.5 470.7 L608.0 470.6 L608.5 470.8 L609.0 470.3 L609.5 470.8 L610.0 470.3 L610.5 470.6 L611.0 470.9 L611.5 470.2 L612.0 470.4 L612.5 470.4 L613.0 470.4 L613.5 470.2 L614.0 470.8 L614.5 470.8 L615.0 470.5 L615.5 470.4 L616.0 470.6 L616.5 470.2 L617.0 470.2 L617.5 470.8 L618.0 470.4 L618.5 470.5 L619.0 470.9 L619.5 470.9 L620.0 470.5 L620.5 470.3 L621.0 470.4 L621.5 470.8 L622.0 470.8 L622.5 470.3 L623.0 470.8 L623.5 470.4 L624.0 470.5 L624.5 470.3 L625.0 470.8 L625.5 470.9 L626.0 470.3 L626.5 470.6 L627.0 470.3 L627.5 470.8 L628.0 470.2 L628.5 470.3 L629.0 470.7 L629.5 470.4 L630.0 470.8 L630.5 470.8 L631.0 470.7 L631.5 470.3 L632.0 470.7 L632.5 470.9 L633.0 470.5 L633.5 470.3 L634.0 470.4 L634.5 470.4 L635.0 470.7 L635.5 470.3 L636.0 470.4 L636.5 470.4 L637.0 470.4 L637.5 470.4 L638.0 470.4 L638.5 470.4 L639.0 470.4 L639.5 470.4 L640.0 470.4 L640.5 470.4 L641.0 470.4 L641.5 470.4 L642.0 470.4 L642.5 470.3 L643.0 470.2 L643.5 470.1 L644.0 470.0 L644.5 469.9 L645.0 469.8 L645.5 469.7 L646.0 469.6 L646.5 469.5 L647.0 469.4 L647.5 469.3 L648.0 469.1 L648.5 469.0 L649.0 468.9 L649.5 468.7 L650.0 468.6 L650.5 468.5 L651.0 468.3 L651.5 468.2 L652.0 468.0 L652.5 467.9 L653.0 467.8 L653.5 467.6 L654.0 467.5 L654.5 467.4 L655.0 467.2 L655.5 467.1 L656.0 466.9 L656.5 466.6 L657.0 466.3 L657.5 466.0 L658.0 465.7 L658.5 465.4 L659.0 465.1 L659.5 464.9 L660.0 464.6 L660.5 464.1 L661.0 463.5 L661.5 462.9 L662.0 462.4 L662.5 461.8 L663.0 461.2 L663.5 460.7 L664.0 460.1 L664.5 459.5 L665.0 458.5 L665.5 457.4 L666.0 456.2 L666.5 455.1 L667.0 454.0 L667.5 452.8 L668.0 451.7 L668.5 450.6 L669.0 449.4 L669.5 448.2 L670.0 446.3 L670.5 444.4 L671.0 442.6 L671.5 440.7 L672.0 438.8 L672.5 437.0 L673.0 435.1 L673.5 432.8 L674.0 430.2 L674.5 427.5 L675.0 424.9 L675.5 422.3 L676.0 419.7 L676.5 413.6 L677.0 407.6 L677.5 402.4 L678.0 397.9 L678.5 391.6 L679.0 383.9 L679.5 376.3 L680.0 367.6 L680.5 354.1 L681.0 340.7 L681.5 329.3 L682.0 319.5 L682.5 309.6 L683.0 303.4 L683.5 299.7 L684.0 296.0 L684.5 292.3 L685.0 288.6 L685.5 286.2 L686.0 284.9 L686.5 283.5 L687.0 282.2 L687.5 281.4 L688.0 281.2 L688.5 280.9 L689.0 280.6 L689.5 280.3 L690.0 280.4 L690.5 280.8 L691.0 281.0 L691.5 281.1 L692.0 282.1 L692.5 283.2 L693.0 283.8 L693.5 284.3 L694.0 285.1 L694.5 286.1 L695.0 286.4 L695.5 286.5 L696.0 287.3 L696.5 287.4 L697.0 288.6 L697.5 288.7 L698.0 289.2 L698.5 289.7 L699.0 290.0 L699.5 291.1 L700.0 291.6 L700.5 292.3 L701.0 293.5 L701.5 293.7 L702.0 294.6 L702.5 295.6 L703.0 295.8 L703.5 296.5 L704.0 297.3 L704.5 297.6 L705.0 298.8 L705.5 299.5 L706.0 299.4 L706.5 300.5 L707.0 301.5 L707.5 301.9 L708.0 303.2 L708.5 303.6 L709.0 304.1 L709.5 305.1 L710.0 306.2 L710.5 307.4 L711.0 308.6 L711.5 309.9 L712.0 311.3 L712.5 312.8 L713.0 314.3 L713.5 315.9 L714.0 317.5 L714.5 319.2 L715.0 321.1 L715.5 323.2 L716.0 325.5 L716.5 328.2 L717.0 332.7 L717.5 339.0 L718.0 343.3 L718.5 347.3 L719.0 355.5 L719.5 363.8 L720.0 371.6 L720.5 378.5 L721.0 385.3 L721.5 392.1 L722.0 398.9" fill="none" stroke="#e0161e" stroke-width="1.6" stroke-linejoin="round"/>
<path d="M89 469.6h1v3h-1zM90 469.6h1v3h-1zM91 469.6h1v4h-1zM92 469.6h1v3h-1zM93 469.6h1v4h-1zM95 469.6h1v3h-1zM96 469.6h1v3h-1zM97 469.6h1v3h-1zM98 469.6h1v3h-1zM99 469.6h1v3h-1zM100 469.6h1v3h-1zM101 469.6h1v4h-1zM102 469.6h1v3h-1zM103 469.6h1v3h-1zM104 469.6h1v3h-1zM106 469.6h1v3h-1zM107 469.6h1v3h-1zM108 469.6h1v4h-1zM109 469.6h1v4h-1zM111 469.6h1v3h-1zM112 469.6h1v3h-1zM113 469.6h1v3h-1zM114 469.6h1v3h-1zM219 469.6h1v4h-1zM220 469.6h1v3h-1zM221 469.6h1v3h-1zM222 469.6h1v4h-1zM223 469.6h1v3h-1zM224 469.6h1v4h-1zM225 469.6h1v3h-1zM226 469.6h1v3h-1zM227 469.6h1v4h-1zM228 469.6h1v3h-1zM229 469.6h1v4h-1zM230 469.6h1v4h-1zM231 469.6h1v4h-1zM232 469.6h1v3h-1zM233 469.6h1v3h-1zM234 469.6h1v4h-1zM235 469.6h1v4h-1zM236 469.6h1v4h-1zM237 469.6h1v4h-1zM238 469.6h1v3h-1zM239 469.6h1v3h-1zM240 469.6h1v4h-1zM241 469.6h1v3h-1zM346 469.6h1v4h-1zM348 469.6h1v3h-1zM349 469.6h1v4h-1zM350 469.6h1v4h-1zM351 469.6h1v3h-1zM352 469.6h1v3h-1zM353 469.6h1v3h-1zM354 469.6h1v3h-1zM355 469.6h1v4h-1zM356 469.6h1v3h-1zM358 469.6h1v3h-1zM359 469.6h1v4h-1zM360 469.6h1v4h-1zM361 469.6h1v3h-1zM362 469.6h1v4h-1zM363 469.6h1v4h-1zM364 469.6h1v3h-1zM365 469.6h1v4h-1zM366 469.6h1v4h-1zM367 469.6h1v4h-1zM368 469.6h1v4h-1zM369 469.6h1v4h-1zM373 469.6h1v3h-1zM374 469.6h1v3h-1zM475 469.6h1v4h-1zM476 469.6h1v4h-1zM477 469.6h1v3h-1zM478 469.6h1v4h-1zM479 469.6h1v3h-1zM480 469.6h1v4h-1zM481 469.6h1v4h-1zM482 469.6h1v4h-1zM483 469.6h1v4h-1zM484 469.6h1v4h-1zM486 469.6h1v4h-1zM488 469.6h1v3h-1zM489 469.6h1v3h-1zM491 469.6h1v3h-1zM492 469.6h1v3h-1zM493 469.6h1v4h-1zM494 469.6h1v4h-1zM495 469.6h1v3h-1zM496 469.6h1v3h-1zM497 469.6h1v3h-1zM498 469.6h1v3h-1zM502 469.6h1v3h-1zM504 469.6h1v3h-1zM505 469.6h1v3h-1zM603 469.6h1v4h-1zM605 469.6h1v4h-1zM606 469.6h1v3h-1zM607 469.6h1v3h-1zM608 469.6h1v4h-1zM609 469.6h1v3h-1zM610 469.6h1v3h-1zM612 469.6h1v3h-1zM613 469.6h1v3h-1zM614 469.6h1v4h-1zM615 469.6h1v4h-1zM616 469.6h1v4h-1zM617 469.6h1v3h-1zM618 469.6h1v4h-1zM619 469.6h1v4h-1zM620 469.6h1v3h-1zM621 469.6h1v4h-1zM622 469.6h1v4h-1zM623 469.6h1v4h-1zM624 469.6h1v3h-1zM625 469.6h1v4h-1zM626 469.6h1v4h-1zM629 469.6h1v3h-1zM630 469.6h1v3h-1zM631 469.6h1v3h-1zM632 469.6h1v3h-1z" fill="#e2171e" shape-rendering="crispEdges"/>
<polygon points="6,412 24.5,412 31,420 24.5,428 6,428" fill="#f8f814"/>
<polygon points="6,469 24.5,469 31,477 24.5,485 6,485" fill="#f01414"/>
</svg>

<!-- slider -->
<div class="a" style="left:742px;top:84px;width:4px;height:443px;box-sizing:border-box;background:#fff;border-left:1px solid #a9a9b4;border-top:1px solid #a9a9b4;border-right:1px solid #f4f4f6;border-radius:1px"></div>
<svg class="a" style="left:726px;top:84px" width="40" height="445" viewBox="726 84 40 445" shape-rendering="crispEdges">
<g stroke="#b0b0b6" stroke-width="1">
<line x1="729" y1="89.5" x2="732" y2="89.5"/><line x1="756" y1="89.5" x2="760" y2="89.5"/>
<line x1="729" y1="176.5" x2="732" y2="176.5"/><line x1="756" y1="176.5" x2="760" y2="176.5"/>
<line x1="729" y1="263.5" x2="732" y2="263.5"/><line x1="756" y1="263.5" x2="760" y2="263.5"/>
<line x1="729" y1="350.5" x2="732" y2="350.5"/><line x1="756" y1="350.5" x2="760" y2="350.5"/>
<line x1="729" y1="437.5" x2="732" y2="437.5"/><line x1="756" y1="437.5" x2="760" y2="437.5"/>
<line x1="729" y1="521.5" x2="732" y2="521.5"/><line x1="756" y1="521.5" x2="760" y2="521.5"/>
</g></svg>
<div class="a" style="left:733px;top:333px;width:22px;height:11px;box-sizing:border-box;border-radius:2.5px;border:1px solid #8fa39a;border-left:3px solid #3fb744;border-right:3px solid #3fb744;background:linear-gradient(to bottom,#ffffff 0%,#f2f2f4 45%,#c4c6cc 100%)"></div>
<!-- vertical separator -->
<div class="a" style="left:765px;top:76px;width:1px;height:459px;background:#a8a8b2"></div>
<div class="a" style="left:766px;top:76px;width:1px;height:459px;background:#ffffff"></div>

<!-- group boxes -->
<div class="gb" style="left:770px;top:82px;width:228px;height:343px"></div>
<div class="gl" style="left:776px;top:76px;width:64px"></div>
<div class="gb" style="left:770px;top:431px;width:228px;height:49px"></div>
<div class="gl" style="left:776px;top:425px;width:87px"></div>
<div class="gb" style="left:770px;top:486px;width:228px;height:48px"></div>
<div class="gl" style="left:776px;top:480px;width:83px"></div>
<div class="gb" style="left:668px;top:544px;width:330px;height:131px"></div>
<div class="gl" style="left:674px;top:538px;width:107px"></div>

<!-- combos -->
<div class="combo" style="left:848px;top:279px;width:137px"><div class="dd"><svg width="16" height="18"><path d="M4 6.6 L8.1 10.9 L12.2 6.6" fill="none" stroke="#2c2c36" stroke-width="2.1"/></svg></div></div>
<div class="combo" style="left:848px;top:447px;width:137px"><div class="dd"><svg width="16" height="18"><path d="M4 6.6 L8.1 10.9 L12.2 6.6" fill="none" stroke="#2c2c36" stroke-width="2.1"/></svg></div></div>
<div class="combo" style="left:848px;top:502px;width:137px"><div class="dd"><svg width="16" height="18"><path d="M4 6.6 L8.1 10.9 L12.2 6.6" fill="none" stroke="#2c2c36" stroke-width="2.1"/></svg></div></div>

<!-- channel list -->
<div class="lv" style="left:6px;top:538px;width:659px;height:114px">
 <div class="a" style="left:21px;top:1px;width:640px;height:14px;background:#e2e2e6"></div>
 <div class="hl" style="left:0;top:28px;width:660px"></div>
 <div class="hl" style="left:0;top:42px;width:660px"></div>
 <div class="hl" style="left:0;top:56px;width:660px"></div>
 <div class="hl" style="left:0;top:70px;width:660px"></div>
 <div class="hl" style="left:0;top:84px;width:660px"></div>
 <div class="hl" style="left:0;top:98px;width:660px"></div>
 <div class="vl" style="left:165px;top:15px;height:100px"></div>
 <div class="vl" style="left:329px;top:15px;height:100px"></div>
 <div class="vl" style="left:493px;top:15px;height:100px"></div>
 <svg class="a" style="left:5px;top:2px" width="13" height="26" viewBox="0 0 13 26">
  <rect x="0.5" y="0.5" width="11" height="11" fill="#f4f6f4" stroke="#1d5281"/><path d="M2.6 5.6 L5 8.2 L9.4 3.2" fill="none" stroke="#22a022" stroke-width="1.9"/>
  <rect x="0.5" y="14.5" width="11" height="11" fill="#f4f6f4" stroke="#1d5281"/><path d="M2.6 19.6 L5 22.2 L9.4 17.2" fill="none" stroke="#22a022" stroke-width="1.9"/>
 </svg>
</div>

<!-- buttons -->
<div class="btn" style="left:7px;top:653px;width:48px"></div>
<div class="btn" style="left:60px;top:653px;width:92px"></div>
<div class="btn" style="left:157px;top:653px;width:51px"></div>
<div class="btn dis" style="left:214px;top:653px;width:49px"></div>

<!-- waveform info list -->
<div class="lv" style="left:681px;top:555px;width:304px;height:113px">
 <div class="a" style="left:0;top:0;width:302px;height:22px;background:linear-gradient(to bottom,#ffffff 0%,#fbfbfd 70%,#e8e8ee 82%,#d2d2dc 92%,#c2c2cf 100%)"></div>
 <div class="a" style="left:242px;top:0;width:60px;height:19px;background:#dcdcdf"></div>
 <div class="a" style="left:79px;top:3px;width:1px;height:15px;background:#c4c4cc"></div><div class="a" style="left:80px;top:3px;width:1px;height:15px;background:#fff"></div>
 <div class="a" style="left:240px;top:3px;width:1px;height:15px;background:#c4c4cc"></div>
 <div class="hl" style="left:0;top:35px;width:302px"></div>
 <div class="hl" style="left:0;top:48px;width:302px"></div>
 <div class="hl" style="left:0;top:61px;width:302px"></div>
 <div class="hl" style="left:0;top:74px;width:302px"></div>
 <div class="hl" style="left:0;top:87px;width:302px"></div>
 <div class="hl" style="left:0;top:100px;width:302px"></div>
 <div class="vl" style="left:81px;top:22px;height:90px"></div>
 <div class="vl" style="left:241px;top:22px;height:90px"></div>
</div>

<!-- status bar -->
<div class="a" style="left:4px;top:674px;width:664px;height:1px;background:#b4b4be"></div>
<div class="a" style="left:4px;top:675px;width:664px;height:1px;background:#ffffff"></div>
<svg class="a" style="left:954px;top:684px" width="18" height="14" viewBox="0 0 18 14"><g fill="none" stroke="#4a4a4e" stroke-width="1.2"><path d="M1.5 7 H14"/><path d="M5 7 L8 3.4 H10.6"/><path d="M7.2 7 L10 10.4 H12.4"/></g><circle cx="2" cy="7" r="1.4" fill="#4a4a4e"/><path d="M13.6 5 L17 7 L13.6 9 Z" fill="#4a4a4e"/><rect x="10.4" y="2.2" width="2.4" height="2.4" fill="#4a4a4e"/><circle cx="13" cy="10.4" r="1.3" fill="#4a4a4e"/></svg>
<div class="ddb a" style="left:977px;top:683px;width:16px;height:17px;box-sizing:border-box;border:1px solid #9c9caa;border-radius:2.5px;background:linear-gradient(to bottom,#ffffff 0%,#f8f8fb 45%,#dcdfea 80%,#cfd3e2 100%)"><svg width="14" height="15"><path d="M3 5.4 L6.9 9.6 L10.8 5.4" fill="none" stroke="#34343c" stroke-width="2.1"/></svg></div>

<!-- window frame -->
<div class="fr" style="left:0;top:30px;width:1px;height:678px;background:#6c6c88"></div>
<div class="fr" style="left:1px;top:30px;width:1px;height:676px;background:#f8f8fc"></div>
<div class="fr" style="left:2px;top:30px;width:1px;height:675px;background:#eeeef6"></div>
<div class="fr" style="left:3px;top:30px;width:1px;height:675px;background:#82829c"></div>
<div class="fr" style="left:4px;top:76px;width:2px;height:459px;background:#e5e5f2"></div>
<div class="fr" style="left:1000px;top:30px;width:1px;height:676px;background:#6c6c84"></div>
<div class="fr" style="left:1001px;top:30px;width:1px;height:676px;background:#9090aa"></div>
<div class="fr" style="left:1002px;top:30px;width:1px;height:676px;background:#f8f8fe"></div>
<div class="fr" style="left:1003px;top:30px;width:1px;height:677px;background:#5c5c70"></div>
<div class="fr" style="left:4px;top:704px;width:996px;height:1px;background:#e4e4f2"></div>
<div class="fr" style="left:1px;top:705px;width:1002px;height:1px;background:#686880"></div>
<div class="fr" style="left:0px;top:706px;width:1004px;height:1px;background:#a4a4b6"></div>
<div class="fr" style="left:0;top:707px;width:1004px;height:1px;background:#fdfdff"></div>
</div>
<span class="t" id="t_title" style="left:25.30px;top:9.84px;font-weight:bold;letter-spacing:0.62px;word-spacing:1.5px;">OWON Oscilloscope Software 2.0.7.1</span>
<span class="t" id="t_m1" style="left:11.25px;top:32.09px;transform:scaleX(0.9298);"><u>F</u>ile</span>
<span class="t" id="t_m2" style="left:44.25px;top:32.09px;transform:scaleX(0.9201);"><u>V</u>iew</span>
<span class="t" id="t_m3" style="left:83.75px;top:32.09px;transform:scaleX(0.9006);">F<u>o</u>rmat</span>
<span class="t" id="t_m4" style="left:132.75px;top:32.09px;transform:scaleX(0.9343);"><u>C</u>ommunications</span>
<span class="t" id="t_m5" style="left:231.00px;top:32.09px;transform:scaleX(0.8800);"><u>L</u>anguage</span>
<span class="t" id="t_m6" style="left:293.00px;top:32.09px;transform:scaleX(0.8911);"><u>H</u>elp</span>
<span class="t" id="t_g1" style="left:778.70px;top:75.34px;color:#1448c6;transform:scaleX(0.9328);">CH1 Cursor</span>
<span class="t" id="t_dy" style="left:783.00px;top:101.64px;transform:scaleX(0.8242);">dy:</span>
<span class="t" id="t_y1" style="left:783.00px;top:123.74px;transform:scaleX(0.8242);">y1:</span>
<span class="t" id="t_y2" style="left:783.00px;top:145.34px;transform:scaleX(0.8242);">y2:</span>
<span class="t" id="t_dx" style="left:783.00px;top:167.44px;transform:scaleX(0.8242);">dx:</span>
<span class="t" id="t_x1" style="left:783.00px;top:189.24px;transform:scaleX(0.8242);">x1:</span>
<span class="t" id="t_x2" style="left:783.00px;top:211.34px;transform:scaleX(0.8242);">x2:</span>
<span class="t" id="t_div" style="left:783.70px;top:233.54px;transform:scaleX(0.9210);">Divisions:</span>
<span class="t" id="t_rng" style="left:849.00px;top:233.54px;transform:scaleX(0.9330);">[-20~20]</span>
<span class="t" id="t_val" style="left:848.40px;top:255.14px;transform:scaleX(0.8991);">-3.02</span>
<span class="t" id="t_type" style="left:783.70px;top:281.54px;transform:scaleX(0.8754);">Type:</span>
<span class="t" id="t_none" style="left:852.70px;top:281.54px;transform:scaleX(0.8540);">None</span>
<span class="t" id="t_g2" style="left:778.70px;top:424.34px;color:#1448c6;letter-spacing:0.093px;">CH1 Time / Div</span>
<span class="t" id="t_sc1" style="left:783.00px;top:450.14px;transform:scaleX(0.9056);">scale:</span>
<span class="t" id="t_us" style="left:851.50px;top:450.14px;transform:scaleX(0.9596);">5&nbsp; uS</span>
<span class="t" id="t_g3" style="left:778.70px;top:479.14px;color:#1448c6;letter-spacing:0.223px;">CH1 Volt / Div</span>
<span class="t" id="t_sc2" style="left:783.00px;top:504.54px;transform:scaleX(0.9056);">scale:</span>
<span class="t" id="t_v1" style="left:851.50px;top:504.54px;transform:scaleX(0.9336);">1.00 V</span>
<span class="t" id="t_g4" style="left:676.40px;top:537.34px;color:#1448c6;transform:scaleX(0.9346);">CH1 WaveForm Info</span>
<span class="t" id="t_hT" style="left:691.90px;top:561.34px;transform:scaleX(0.9456);">Type</span>
<span class="t" id="t_hV" style="left:772.40px;top:561.34px;transform:scaleX(0.9426);">Value</span>
<span class="t" id="t_r1a" style="left:689.10px;top:577.64px;transform:scaleX(0.9145);">Frequency:</span>
<span class="t" id="t_r1b" style="left:768.30px;top:577.64px;transform:scaleX(0.9096);">107.499 kHz</span>
<span class="t" id="t_r2a" style="left:689.10px;top:591.34px;transform:scaleX(0.9019);">Period:</span>
<span class="t" id="t_r2b" style="left:768.30px;top:591.34px;transform:scaleX(0.8970);">9.302 uS</span>
<span class="t" id="t_r3a" style="left:689.10px;top:604.14px;transform:scaleX(0.9146);">PK-PK:</span>
<span class="t" id="t_r3b" style="left:768.30px;top:604.14px;transform:scaleX(0.9426);">3.440 V</span>
<span class="t" id="t_usb" style="left:818.60px;top:684.34px;color:#1c961c;transform:scaleX(0.9694);">automatically check USB:</span>
<span class="t" id="t_pathA" style="left:10.70px;top:683.84px;transform:scaleX(0.9360);">C:¥Documents and Settings¥DELL¥My Documents¥</span>
<span class="t" id="t_pathB" style="left:272.80px;top:683.84px;transform:scaleX(0.7554);">ダウンロード</span>
<span class="t" id="t_pathC" style="left:327.70px;top:683.84px;transform:scaleX(0.9098);">¥OWON¥Oscilloscope¥1130830159.bin</span>
<span class="t" id="t_c1" style="left:29.50px;top:540.04px;transform:scaleX(0.8536);">CH1</span>
<span class="t" id="t_c2" style="left:29.50px;top:554.04px;transform:scaleX(0.8536);">CH2</span>
<span class="t" id="t_c1t" style="left:302.80px;top:540.04px;transform:scaleX(0.9525);">5&nbsp; uS</span>
<span class="t" id="t_c2t" style="left:302.80px;top:554.04px;transform:scaleX(0.9525);">5&nbsp; uS</span>
<span class="t" id="t_c1v" style="left:461.40px;top:540.04px;transform:scaleX(0.9394);">1.00 V</span>
<span class="t" id="t_c2v" style="left:454.60px;top:554.04px;transform:scaleX(0.9526);">200 mV</span>
<span class="t" id="t_c1p" style="left:506.40px;top:540.04px;letter-spacing:0.006px;">/10</span>
<span class="t" id="t_c2p" style="left:506.40px;top:554.04px;letter-spacing:0.006px;">/10</span>
<span class="t" id="t_b1" style="left:12.00px;top:655.54px;transform:scaleX(0.9974);">To FFT</span>
<span class="t" id="t_b2" style="left:65.70px;top:655.54px;transform:scaleX(0.9580);">To Mathematics</span>
<span class="t" id="t_b3" style="left:161.40px;top:655.54px;transform:scaleX(0.9456);">Inverted</span>
<span class="t" id="t_b4" style="left:218.30px;top:655.54px;color:#b4b4b4;transform:scaleX(0.8929);">Remove</span>
<span class="t" id="t_mk2" style="left:6.00px;top:410.64px;transform:scaleX(0.9077);">CH2</span>
<span class="t" id="t_mk1" style="left:7.30px;top:468.44px;font-style:italic;transform:scaleX(0.8828);">CH1</span>

</body></html>
